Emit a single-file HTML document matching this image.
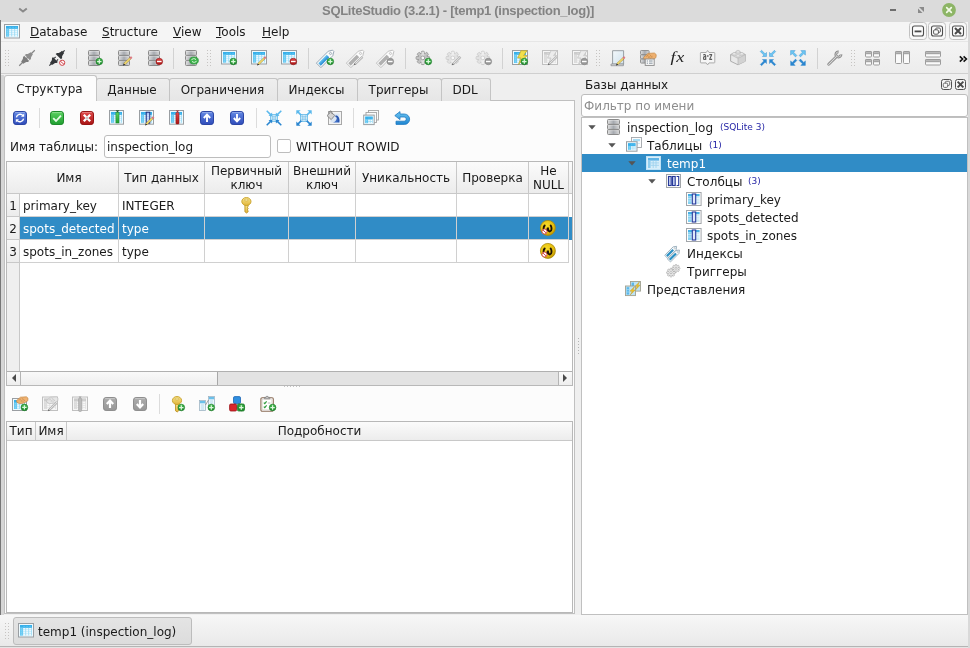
<!DOCTYPE html>
<html><head><meta charset="utf-8">
<style>
*{box-sizing:border-box;margin:0;padding:0}
html,body{width:970px;height:648px;overflow:hidden;background:#efefef}
body{will-change:transform;font-family:"DejaVu Sans","Liberation Sans",sans-serif;font-size:12px;color:#1a1a1a;position:relative}
.a{position:absolute}
.nw{white-space:nowrap}
#title{left:0;top:0;width:970px;height:22px;background:#dbdbdb}
#title .t{position:absolute;left:0;width:916px;top:3px;text-align:center;font-family:"Liberation Sans",sans-serif;font-weight:bold;font-size:13px;letter-spacing:-0.3px;color:#838383;white-space:nowrap}
#menu{left:0;top:22px;width:970px;height:20px;background:#f5f5f5;border-bottom:1px solid #e6e6e6}
#menu span{position:absolute;top:3px;white-space:nowrap}
#tool{left:0;top:42px;width:970px;height:32px;background:linear-gradient(#f4f4f4,#ececec);border-bottom:1px solid #cfcfcf}
svg{position:absolute;overflow:visible}
.tab{position:absolute;top:78px;height:23px;background:linear-gradient(#eeeeee,#e6e6e6);border:1px solid #c4c4c4;border-bottom:none;border-radius:3px 3px 0 0;text-align:center;line-height:23px;white-space:nowrap;padding-right:2px}
.tab.act{top:75px;height:26px;background:#fcfcfc;line-height:27px;z-index:3}
#pane{left:4px;top:100px;width:571px;height:514px;background:#fcfcfc;border:1px solid #c0c0c0}
.sep{position:absolute;width:1px;background:#dcdcdc}
#tbl{left:6px;top:161px;width:567px;height:225px;background:#fff;border:1px solid #b8b8b8}
.hd{position:absolute;background:linear-gradient(#fbfbfb,#ececec);border-right:1px solid #c8c8c8;border-bottom:1px solid #c8c8c8;text-align:center;line-height:14px;white-space:nowrap;display:flex;align-items:center;justify-content:center}
.cell{position:absolute;height:23px;line-height:24px;border-right:1px solid #d0d0d0;border-bottom:1px solid #d0d0d0;padding-left:3px;white-space:nowrap;overflow:hidden}
.sel{background:#308cc6;color:#fff}
.rn{position:absolute;width:13px;height:23px;line-height:24px;text-align:center;background:linear-gradient(#f8f8f8,#ececec);border-right:1px solid #c8c8c8;border-bottom:1px solid #c8c8c8}
</style></head><body>
<div id="title" class="a"><div class="t">SQLiteStudio (3.2.1) - [temp1 (inspection_log)]</div></div>
<div id="menu" class="a">
<span style="left:30px"><u>D</u>atabase</span>
<span style="left:102px"><u>S</u>tructure</span>
<span style="left:173px"><u>V</u>iew</span>
<span style="left:216px"><u>T</u>ools</span>
<span style="left:262px"><u>H</u>elp</span>
</div>
<div id="tool" class="a"></div>
<div class="a" style="left:0;top:20px;width:1px;height:628px;background:#777"></div>
<div class="a" style="left:968px;top:22px;width:2px;height:626px;background:#d9d9d9;z-index:9"></div>
<div class="a" style="left:1px;top:75px;width:3px;height:540px;background:#d6d6d6"></div>

<div id="pane" class="a"></div>
<div class="tab act" style="left:4px;width:93px">Структура</div>
<div class="tab" style="left:96px;width:74px">Данные</div>
<div class="tab" style="left:169px;width:109px">Ограничения</div>
<div class="tab" style="left:277px;width:81px">Индексы</div>
<div class="tab" style="left:357px;width:85px">Триггеры</div>
<div class="tab" style="left:441px;width:50px">DDL</div>
<div class="sep" style="left:39px;top:108px;height:20px"></div>
<div class="sep" style="left:256px;top:108px;height:20px"></div>
<div class="sep" style="left:353px;top:108px;height:20px"></div>
<div class="a nw" style="left:10px;top:140px">Имя таблицы:</div>
<div class="a" style="left:104px;top:135px;width:167px;height:23px;background:#fff;border:1px solid #bdbdbd;border-radius:3px;line-height:23px;padding-left:2px">inspection_log</div>
<div class="a" style="left:277px;top:139px;width:14px;height:14px;background:#fff;border:1px solid #bdbdbd;border-radius:2px"></div>
<div class="a nw" style="left:296px;top:140px">WITHOUT ROWID</div>
<div id="tbl" class="a"></div>

<div class="hd" style="left:7px;top:162px;width:112px;height:32px"><span style="padding-left:13px">Имя</span></div>
<div class="hd" style="left:119px;top:162px;width:86px;height:32px">Тип данных</div>
<div class="hd" style="left:205px;top:162px;width:84px;height:32px">Первичный<br>ключ</div>
<div class="hd" style="left:289px;top:162px;width:67px;height:32px">Внешний<br>ключ</div>
<div class="hd" style="left:356px;top:162px;width:101px;height:32px">Уникальность</div>
<div class="hd" style="left:457px;top:162px;width:72px;height:32px">Проверка</div>
<div class="hd" style="left:529px;top:162px;width:40px;height:32px">Не<br>NULL</div>
<div class="hd" style="left:569px;top:162px;width:3px;height:32px;border-right:none"></div>
<div class="a" style="left:7px;top:194px;width:13px;height:177px;background:#efefef;border-right:1px solid #c8c8c8"></div>
<div class="rn" style="left:7px;top:194px">1</div>
<div class="cell" style="left:20px;top:194px;width:99px">primary_key</div>
<div class="cell" style="left:119px;top:194px;width:86px">INTEGER</div>
<div class="cell" style="left:205px;top:194px;width:84px"></div>
<div class="cell" style="left:289px;top:194px;width:67px"></div>
<div class="cell" style="left:356px;top:194px;width:101px"></div>
<div class="cell" style="left:457px;top:194px;width:72px"></div>
<div class="cell" style="left:529px;top:194px;width:40px"></div>
<div class="rn" style="left:7px;top:217px">2</div>
<div class="cell sel" style="left:20px;top:217px;width:99px">spots_detected</div>
<div class="cell sel" style="left:119px;top:217px;width:86px">type</div>
<div class="cell sel" style="left:205px;top:217px;width:84px"></div>
<div class="cell sel" style="left:289px;top:217px;width:67px"></div>
<div class="cell sel" style="left:356px;top:217px;width:101px"></div>
<div class="cell sel" style="left:457px;top:217px;width:72px"></div>
<div class="cell sel" style="left:529px;top:217px;width:40px"></div>
<div class="cell sel" style="left:569px;top:217px;width:3px;border:none;padding:0"></div>
<div class="rn" style="left:7px;top:240px">3</div>
<div class="cell" style="left:20px;top:240px;width:99px">spots_in_zones</div>
<div class="cell" style="left:119px;top:240px;width:86px">type</div>
<div class="cell" style="left:205px;top:240px;width:84px"></div>
<div class="cell" style="left:289px;top:240px;width:67px"></div>
<div class="cell" style="left:356px;top:240px;width:101px"></div>
<div class="cell" style="left:457px;top:240px;width:72px"></div>
<div class="cell" style="left:529px;top:240px;width:40px"></div>

<div class="a" style="left:7px;top:371px;width:565px;height:14px;background:linear-gradient(#f9f9f9,#eeeeee);border-top:1px solid #b0b0b0"></div>
<div class="a" style="left:20px;top:372px;width:1px;height:13px;background:#b4b4b4"></div>
<div class="a" style="left:558px;top:372px;width:1px;height:13px;background:#b4b4b4"></div>
<div class="a" style="left:217px;top:372px;width:341px;height:13px;background:#e3e3e3;border-left:1px solid #a8a8a8"></div>
<svg style="left:10px;top:373px" width="8" height="10" viewBox="0 0 8 10"><path d="M6 1 L2 5 L6 9Z" fill="#4a4a4a"/></svg>
<svg style="left:561px;top:373px" width="8" height="10" viewBox="0 0 8 10"><path d="M2 1 L6 5 L2 9Z" fill="#4a4a4a"/></svg>
<div class="sep" style="left:159px;top:394px;height:20px"></div>
<div class="a" style="left:6px;top:421px;width:567px;height:192px;background:#fff;border:1px solid #b8b8b8"></div>
<div class="hd" style="left:7px;top:422px;width:29px;height:19px">Тип</div>
<div class="hd" style="left:36px;top:422px;width:31px;height:19px">Имя</div>
<div class="hd" style="left:67px;top:422px;width:505px;height:19px;border-right:none">Подробности</div>
<div class="a" style="left:0;top:615px;width:970px;height:31px;background:linear-gradient(#f7f7f7,#e9e9e9)"></div>
<div class="a" style="left:0;top:646px;width:970px;height:1px;background:#b4b4b4"></div>
<div class="a" style="left:0;top:647px;width:970px;height:1px;background:#e4e4e4"></div>
<div class="a nw" style="left:13px;top:617px;width:179px;height:28px;background:linear-gradient(#e4e4e4,#dcdcdc);border:1px solid #bcbcbc;border-radius:3px;line-height:28px;padding-left:24px">temp1 (inspection_log)</div>
<div class="a nw" style="left:585px;top:78px">Базы данных</div>
<div class="a nw" style="left:581px;top:94px;width:387px;height:23px;background:#fff;border:1px solid #bdbdbd;border-radius:3px;line-height:23px;padding-left:2px;color:#8e8e8e">Фильтр по имени</div>
<div class="a" style="left:581px;top:117px;width:387px;height:498px;background:#fff;border:1px solid #c0c0c0"></div>
<div class="a" style="left:582px;top:154px;width:385px;height:18px;background:#308cc6"></div>

<div class="a nw" style="left:627px;top:119px;line-height:18px">inspection_log</div>
<div class="a nw" style="left:720px;top:120px;line-height:14px;font-size:9px;color:#2626a6">(SQLite 3)</div>
<svg style="left:588px;top:125px" width="8" height="5" viewBox="0 0 8 5"><path d="M0.3 0.2 L7.7 0.2 L4 4.4Z" fill="#555"/></svg>
<div class="a nw" style="left:647px;top:137px;line-height:18px">Таблицы</div>
<div class="a nw" style="left:709px;top:138px;line-height:14px;font-size:9px;color:#2626a6">(1)</div>
<svg style="left:608px;top:143px" width="8" height="5" viewBox="0 0 8 5"><path d="M0.3 0.2 L7.7 0.2 L4 4.4Z" fill="#555"/></svg>
<div class="a nw" style="left:667px;top:155px;line-height:18px;color:#fff">temp1</div>
<svg style="left:628px;top:161px" width="8" height="5" viewBox="0 0 8 5"><path d="M0.3 0.2 L7.7 0.2 L4 4.4Z" fill="#555"/></svg>
<div class="a nw" style="left:687px;top:173px;line-height:18px">Столбцы</div>
<div class="a nw" style="left:748px;top:174px;line-height:14px;font-size:9px;color:#2626a6">(3)</div>
<svg style="left:648px;top:179px" width="8" height="5" viewBox="0 0 8 5"><path d="M0.3 0.2 L7.7 0.2 L4 4.4Z" fill="#555"/></svg>
<div class="a nw" style="left:707px;top:191px;line-height:18px">primary_key</div>
<div class="a nw" style="left:707px;top:209px;line-height:18px">spots_detected</div>
<div class="a nw" style="left:707px;top:227px;line-height:18px">spots_in_zones</div>
<div class="a nw" style="left:687px;top:245px;line-height:18px">Индексы</div>
<div class="a nw" style="left:687px;top:263px;line-height:18px">Триггеры</div>
<div class="a nw" style="left:647px;top:281px;line-height:18px">Представления</div>
<svg width="0" height="0" style="left:0;top:0"><defs>
<linearGradient id="gS" x1="0" y1="0" x2="0" y2="1"><stop offset="0" stop-color="#e6e6e6"/><stop offset="0.5" stop-color="#b4b4b4"/><stop offset="1" stop-color="#8e8e8e"/></linearGradient>
<linearGradient id="gH" x1="0" y1="0" x2="1" y2="0"><stop offset="0" stop-color="#e0e0e0"/><stop offset="0.5" stop-color="#a6aab0"/><stop offset="1" stop-color="#dadada"/></linearGradient>
<linearGradient id="gB" x1="0" y1="0" x2="0" y2="1"><stop offset="0" stop-color="#6288e4"/><stop offset="1" stop-color="#304cba"/></linearGradient>
<linearGradient id="gG" x1="0" y1="0" x2="0" y2="1"><stop offset="0" stop-color="#4cc256"/><stop offset="1" stop-color="#178426"/></linearGradient>
<linearGradient id="gG2" x1="0" y1="0" x2="0" y2="1"><stop offset="0" stop-color="#5cd262"/><stop offset="1" stop-color="#1f9e30"/></linearGradient>
<linearGradient id="gR" x1="0" y1="0" x2="0" y2="1"><stop offset="0" stop-color="#e24a4a"/><stop offset="1" stop-color="#a81414"/></linearGradient>
<linearGradient id="gY" x1="0" y1="0" x2="0" y2="1"><stop offset="0" stop-color="#adadad"/><stop offset="1" stop-color="#979797"/></linearGradient>
<linearGradient id="gK" x1="0" y1="0" x2="0" y2="1"><stop offset="0" stop-color="#f8e68e"/><stop offset="1" stop-color="#e0b43a"/></linearGradient>
<linearGradient id="gP" x1="0" y1="0" x2="1" y2="1"><stop offset="0" stop-color="#f3f8fb"/><stop offset="1" stop-color="#d0e2ee"/></linearGradient>
<linearGradient id="gA" x1="0" y1="0" x2="0" y2="1"><stop offset="0" stop-color="#6cc6f2"/><stop offset="1" stop-color="#1f86d2"/></linearGradient>
<radialGradient id="gN" cx="0.4" cy="0.35" r="0.7"><stop offset="0" stop-color="#f7dc2a"/><stop offset="0.7" stop-color="#e4bb0c"/><stop offset="1" stop-color="#b98f00"/></radialGradient>
</defs></svg>
<svg style="left:18px;top:7px" width="10" height="6" viewBox="0 0 10 6"><path d="M1.2 1.4L5 4.6L8.8 1.4" fill="none" stroke="#898989" stroke-width="1.9" stroke-linejoin="miter"/></svg>
<svg style="left:890px;top:9px" width="6" height="2" viewBox="0 0 6 2"><rect width="6" height="2" fill="#6e6e6e"/></svg>
<svg style="left:918px;top:7px" width="6" height="6" viewBox="0 0 6 6"><path d="M1 0h5v5z" fill="#8a8a8a"/><path d="M0 1.5v4.5h4.5z" fill="#8a8a8a"/></svg>
<svg style="left:942px;top:2.7px" width="14" height="14" viewBox="0 0 14 14"><circle cx="7" cy="7" r="6.9" fill="#8db566"/><path d="M4.7 4.7l4.6 4.6M9.3 4.7l-4.6 4.6" stroke="#f2fbe8" stroke-width="1.7" stroke-linecap="round"/></svg>
<svg style="left:4px;top:24px" width="16" height="15" viewBox="0 0 16 15"><g transform="translate(0 0)"><rect x="0.5" y="0.5" width="15" height="13.5" fill="#eefaff" stroke="#9a9ea2" stroke-width="1"/><rect x="2" y="2" width="12" height="10.5" fill="#9cdcf6"/><rect x="2" y="2" width="12" height="2.7" fill="#38b0ea"/><rect x="2" y="4.7" width="2.8" height="7.8" fill="#5cc6f2"/><rect x="5.20" y="2.9" width="1.97" height="1" fill="#5cc6f2" opacity="0.8"/><rect x="5.20" y="5.20" width="2.07" height="1.3" fill="#ffffff"/><rect x="5.20" y="7.20" width="2.07" height="1.3" fill="#ffffff"/><rect x="5.20" y="9.20" width="2.07" height="1.3" fill="#ffffff"/><rect x="5.20" y="11.20" width="2.07" height="1.3" fill="#ffffff"/><rect x="8.17" y="2.9" width="1.97" height="1" fill="#5cc6f2" opacity="0.8"/><rect x="8.17" y="5.20" width="2.07" height="1.3" fill="#ffffff"/><rect x="8.17" y="7.20" width="2.07" height="1.3" fill="#ffffff"/><rect x="8.17" y="9.20" width="2.07" height="1.3" fill="#ffffff"/><rect x="8.17" y="11.20" width="2.07" height="1.3" fill="#ffffff"/><rect x="11.13" y="2.9" width="1.97" height="1" fill="#5cc6f2" opacity="0.8"/><rect x="11.13" y="5.20" width="2.07" height="1.3" fill="#ffffff"/><rect x="11.13" y="7.20" width="2.07" height="1.3" fill="#ffffff"/><rect x="11.13" y="9.20" width="2.07" height="1.3" fill="#ffffff"/><rect x="11.13" y="11.20" width="2.07" height="1.3" fill="#ffffff"/><rect x="2.7" y="5.20" width="1.3" height="1.3" fill="#9cdcf6" opacity="0.7"/><rect x="2.7" y="7.20" width="1.3" height="1.3" fill="#9cdcf6" opacity="0.7"/><rect x="2.7" y="9.20" width="1.3" height="1.3" fill="#9cdcf6" opacity="0.7"/><rect x="2.7" y="11.20" width="1.3" height="1.3" fill="#9cdcf6" opacity="0.7"/></g></svg>
<svg style="left:909px;top:22px" width="18" height="18" viewBox="0 0 18 18"><rect x="0.5" y="0.5" width="17" height="17" rx="3" fill="#f8f8f8" stroke="#c2c2c2" stroke-width="1"/><rect x="3.5" y="4" width="11" height="10" rx="2" fill="#fbfbfb" stroke="#4e4e4e" stroke-width="1.1"/><path d="M5.6 9.4h6.8" stroke="#4a4a4a" stroke-width="1.8"/></svg>
<svg style="left:928px;top:22px" width="18" height="18" viewBox="0 0 18 18"><rect x="0.5" y="0.5" width="17" height="17" rx="3" fill="#f8f8f8" stroke="#c2c2c2" stroke-width="1"/><rect x="3.5" y="4" width="11" height="10" rx="2" fill="#fbfbfb" stroke="#4e4e4e" stroke-width="1.1"/><rect x="7.6" y="6" width="4.8" height="4.4" rx="1.2" fill="none" stroke="#4a4a4a" stroke-width="0.9"/><rect x="5.6" y="7.8" width="4.8" height="4.4" rx="1.2" fill="#fbfbfb" stroke="#4a4a4a" stroke-width="0.9"/></svg>
<svg style="left:948.5px;top:22px" width="18" height="18" viewBox="0 0 18 18"><rect x="0.5" y="0.5" width="17" height="17" rx="3" fill="#f8f8f8" stroke="#c2c2c2" stroke-width="1"/><rect x="3.5" y="4" width="11" height="10" rx="2" fill="#fbfbfb" stroke="#4e4e4e" stroke-width="1.1"/><path d="M6 6l6 6M12 6l-6 6" stroke="#4a4a4a" stroke-width="2"/></svg>
<svg style="left:941px;top:79px" width="11" height="11" viewBox="0 0 11 11"><rect x="0.5" y="0.5" width="10" height="10" rx="2" fill="#f4f4f4" stroke="#505050" stroke-width="1"/><rect x="4.3" y="2.3" width="4.4" height="4.2" rx="1.2" fill="none" stroke="#505050" stroke-width="0.8"/><rect x="2.3" y="4.2" width="4.4" height="4.2" rx="1.2" fill="#f8f8f8" stroke="#505050" stroke-width="0.8"/></svg>
<svg style="left:955px;top:79px" width="11" height="11" viewBox="0 0 11 11"><rect x="0.5" y="0.5" width="10" height="10" rx="2" fill="#f4f4f4" stroke="#505050" stroke-width="1"/><path d="M2.6 2.6l5.8 5.8M8.4 2.6l-5.8 5.8" stroke="#4a4a4a" stroke-width="1.9"/></svg>
<svg style="left:5px;top:50px" width="4" height="19" viewBox="0 0 4 19"><rect x="0" y="0" width="1" height="1" fill="#c6c4c2"/><rect x="3" y="0" width="1" height="1" fill="#c6c4c2"/><rect x="0" y="3" width="1" height="1" fill="#c6c4c2"/><rect x="3" y="3" width="1" height="1" fill="#c6c4c2"/><rect x="0" y="6" width="1" height="1" fill="#c6c4c2"/><rect x="3" y="6" width="1" height="1" fill="#c6c4c2"/><rect x="0" y="9" width="1" height="1" fill="#c6c4c2"/><rect x="3" y="9" width="1" height="1" fill="#c6c4c2"/><rect x="0" y="12" width="1" height="1" fill="#c6c4c2"/><rect x="3" y="12" width="1" height="1" fill="#c6c4c2"/><rect x="0" y="15" width="1" height="1" fill="#c6c4c2"/><rect x="3" y="15" width="1" height="1" fill="#c6c4c2"/></svg>
<svg style="left:19px;top:50px" width="16" height="16" viewBox="0 0 16 16"><g transform="translate(8 8) rotate(-45)"><path d="M-11 0H11" stroke="#858585" stroke-width="1.2"/><path d="M0.5 -3.6V3.6L2.2 3.4 3.4 2.4 5.4 1.8 6.8 1.5V-1.5L5.4 -1.8 3.4 -2.4 2.2 -3.4z" fill="#8e8e8e"/><path d="M-0.5 -3.6V3.6L-2.2 3.4 -3.4 2.4 -5.4 1.8 -6.8 1.5V-1.5L-5.4 -1.8 -3.4 -2.4 -2.2 -3.4z" fill="#7c7c7c"/></g></svg>
<svg style="left:49px;top:50px" width="16" height="16" viewBox="0 0 16 16"><g transform="translate(8 8) rotate(-45)"><path d="M-10.8 0H-8M8 0H10.8" stroke="#3a3d40" stroke-width="1.3"/><path d="M-2.2 -3.5V3.5L-3.8 3.3 -5 2.2 -7 1.7 -8.6 1.4V-1.4L-7 -1.7 -5 -2.2 -3.8 -3.3z" fill="#34373a"/><path d="M-2.3 -1.7H-0.2M-2.3 1.7H-0.2" stroke="#34373a" stroke-width="1.1"/><path d="M1.9 -3.8V3.8L3.6 3.6 4.8 2.4 6.8 1.8 8.6 1.5V-1.5L6.8 -1.8 4.8 -2.4 3.6 -3.6z" fill="#34373a"/></g><circle cx="13.2" cy="12.8" r="2.6" fill="#fff" stroke="#d0444a" stroke-width="1"/><path d="M11.4 11.2l3.6 3.2" stroke="#d0444a" stroke-width="1"/></svg>
<div class="a" style="left:76px;top:48px;width:1px;height:21px;background:#d2d2d2"></div>
<svg style="left:87px;top:50px" width="16" height="16" viewBox="0 0 16 16"><rect x="1.5" y="0.5" width="11" height="4.8" rx="0.9" fill="url(#gH)" stroke="#8a8a8a" stroke-width="1"/><path d="M2.4 1.5H11.6" stroke="#f6f6f6" stroke-width="0.7" opacity="0.55"/><rect x="1.5" y="5.6" width="11" height="4.8" rx="0.9" fill="url(#gH)" stroke="#8a8a8a" stroke-width="1"/><path d="M2.4 6.6H11.6" stroke="#f6f6f6" stroke-width="0.7" opacity="0.55"/><rect x="1.5" y="10.7" width="11" height="4.8" rx="0.9" fill="url(#gH)" stroke="#8a8a8a" stroke-width="1"/><path d="M2.4 11.7H11.6" stroke="#f6f6f6" stroke-width="0.7" opacity="0.55"/><circle cx="12.3" cy="11.5" r="3.3" fill="url(#gG)" stroke="#1f7f2b" stroke-width="0.7"/><path d="M10.100000000000001 11.5H14.5M12.3 9.3V13.7" stroke="#dcf8dc" stroke-width="1.25"/></svg>
<svg style="left:117px;top:50px" width="16" height="16" viewBox="0 0 16 16"><rect x="1.5" y="0.5" width="11" height="4.8" rx="0.9" fill="url(#gH)" stroke="#8a8a8a" stroke-width="1"/><path d="M2.4 1.5H11.6" stroke="#f6f6f6" stroke-width="0.7" opacity="0.55"/><rect x="1.5" y="5.6" width="11" height="4.8" rx="0.9" fill="url(#gH)" stroke="#8a8a8a" stroke-width="1"/><path d="M2.4 6.6H11.6" stroke="#f6f6f6" stroke-width="0.7" opacity="0.55"/><rect x="1.5" y="10.7" width="11" height="4.8" rx="0.9" fill="url(#gH)" stroke="#8a8a8a" stroke-width="1"/><path d="M2.4 11.7H11.6" stroke="#f6f6f6" stroke-width="0.7" opacity="0.55"/><path d="M7.4 14L13.4 8.2" stroke="#b48a20" stroke-width="2"/><path d="M7.4 14L13.4 8.2" stroke="#f6e67c" stroke-width="1.1"/><path d="M13.1 8.5L14.7 7" stroke="#d2666e" stroke-width="2"/><path d="M13.1 8.5L14.7 7" stroke="#f0a0a4" stroke-width="0.8"/><path d="M6 15.4l0.8-2 1.3 1.3z" fill="#111"/></svg>
<svg style="left:147px;top:50px" width="16" height="16" viewBox="0 0 16 16"><rect x="1.5" y="0.5" width="11" height="4.8" rx="0.9" fill="url(#gH)" stroke="#8a8a8a" stroke-width="1"/><path d="M2.4 1.5H11.6" stroke="#f6f6f6" stroke-width="0.7" opacity="0.55"/><rect x="1.5" y="5.6" width="11" height="4.8" rx="0.9" fill="url(#gH)" stroke="#8a8a8a" stroke-width="1"/><path d="M2.4 6.6H11.6" stroke="#f6f6f6" stroke-width="0.7" opacity="0.55"/><rect x="1.5" y="10.7" width="11" height="4.8" rx="0.9" fill="url(#gH)" stroke="#8a8a8a" stroke-width="1"/><path d="M2.4 11.7H11.6" stroke="#f6f6f6" stroke-width="0.7" opacity="0.55"/><circle cx="12.3" cy="11.5" r="3.3" fill="url(#gR)" stroke="#8e1010" stroke-width="0.6"/><path d="M10.0 11.5H14.600000000000001" stroke="#fff" stroke-width="1.4"/></svg>
<div class="a" style="left:173px;top:48px;width:1px;height:21px;background:#d2d2d2"></div>
<svg style="left:184px;top:50px" width="16" height="16" viewBox="0 0 16 16"><rect x="1.5" y="0.5" width="11" height="4.8" rx="0.9" fill="url(#gH)" stroke="#8a8a8a" stroke-width="1"/><path d="M2.4 1.5H11.6" stroke="#f6f6f6" stroke-width="0.7" opacity="0.55"/><rect x="1.5" y="5.6" width="11" height="4.8" rx="0.9" fill="url(#gH)" stroke="#8a8a8a" stroke-width="1"/><path d="M2.4 6.6H11.6" stroke="#f6f6f6" stroke-width="0.7" opacity="0.55"/><rect x="1.5" y="10.7" width="11" height="4.8" rx="0.9" fill="url(#gH)" stroke="#8a8a8a" stroke-width="1"/><path d="M2.4 11.7H11.6" stroke="#f6f6f6" stroke-width="0.7" opacity="0.55"/><ellipse cx="10" cy="10.5" rx="4.4" ry="3.6" fill="#3bb24a" stroke="#1f8a2e" stroke-width="0.6"/><path d="M7.4 10.2c.6-1.8 3.4-2 4.6-.6M12.6 10.8c-.6 1.8-3.4 2-4.6.6" fill="none" stroke="#dff7e0" stroke-width="1"/></svg>
<svg style="left:207px;top:50px" width="4" height="19" viewBox="0 0 4 19"><rect x="0" y="0" width="1" height="1" fill="#c6c4c2"/><rect x="3" y="0" width="1" height="1" fill="#c6c4c2"/><rect x="0" y="3" width="1" height="1" fill="#c6c4c2"/><rect x="3" y="3" width="1" height="1" fill="#c6c4c2"/><rect x="0" y="6" width="1" height="1" fill="#c6c4c2"/><rect x="3" y="6" width="1" height="1" fill="#c6c4c2"/><rect x="0" y="9" width="1" height="1" fill="#c6c4c2"/><rect x="3" y="9" width="1" height="1" fill="#c6c4c2"/><rect x="0" y="12" width="1" height="1" fill="#c6c4c2"/><rect x="3" y="12" width="1" height="1" fill="#c6c4c2"/><rect x="0" y="15" width="1" height="1" fill="#c6c4c2"/><rect x="3" y="15" width="1" height="1" fill="#c6c4c2"/></svg>
<svg style="left:221px;top:50px" width="16" height="16" viewBox="0 0 16 16"><g transform="translate(0 0)"><rect x="0.5" y="0.5" width="15" height="13.5" fill="#eefaff" stroke="#9a9ea2" stroke-width="1"/><rect x="2" y="2" width="12" height="10.5" fill="#9cdcf6"/><rect x="2" y="2" width="12" height="2.7" fill="#38b0ea"/><rect x="2" y="4.7" width="2.8" height="7.8" fill="#5cc6f2"/><rect x="5.20" y="2.9" width="1.97" height="1" fill="#5cc6f2" opacity="0.8"/><rect x="5.20" y="5.20" width="2.07" height="1.3" fill="#ffffff"/><rect x="5.20" y="7.20" width="2.07" height="1.3" fill="#ffffff"/><rect x="5.20" y="9.20" width="2.07" height="1.3" fill="#ffffff"/><rect x="5.20" y="11.20" width="2.07" height="1.3" fill="#ffffff"/><rect x="8.17" y="2.9" width="1.97" height="1" fill="#5cc6f2" opacity="0.8"/><rect x="8.17" y="5.20" width="2.07" height="1.3" fill="#ffffff"/><rect x="8.17" y="7.20" width="2.07" height="1.3" fill="#ffffff"/><rect x="8.17" y="9.20" width="2.07" height="1.3" fill="#ffffff"/><rect x="8.17" y="11.20" width="2.07" height="1.3" fill="#ffffff"/><rect x="11.13" y="2.9" width="1.97" height="1" fill="#5cc6f2" opacity="0.8"/><rect x="11.13" y="5.20" width="2.07" height="1.3" fill="#ffffff"/><rect x="11.13" y="7.20" width="2.07" height="1.3" fill="#ffffff"/><rect x="11.13" y="9.20" width="2.07" height="1.3" fill="#ffffff"/><rect x="11.13" y="11.20" width="2.07" height="1.3" fill="#ffffff"/><rect x="2.7" y="5.20" width="1.3" height="1.3" fill="#9cdcf6" opacity="0.7"/><rect x="2.7" y="7.20" width="1.3" height="1.3" fill="#9cdcf6" opacity="0.7"/><rect x="2.7" y="9.20" width="1.3" height="1.3" fill="#9cdcf6" opacity="0.7"/><rect x="2.7" y="11.20" width="1.3" height="1.3" fill="#9cdcf6" opacity="0.7"/></g><circle cx="12.3" cy="11.5" r="3.3" fill="url(#gG)" stroke="#1f7f2b" stroke-width="0.7"/><path d="M10.100000000000001 11.5H14.5M12.3 9.3V13.7" stroke="#dcf8dc" stroke-width="1.25"/></svg>
<svg style="left:251px;top:50px" width="16" height="16" viewBox="0 0 16 16"><g transform="translate(0 0)"><rect x="0.5" y="0.5" width="15" height="13.5" fill="#eefaff" stroke="#9a9ea2" stroke-width="1"/><rect x="2" y="2" width="12" height="10.5" fill="#9cdcf6"/><rect x="2" y="2" width="12" height="2.7" fill="#38b0ea"/><rect x="2" y="4.7" width="2.8" height="7.8" fill="#5cc6f2"/><rect x="5.20" y="2.9" width="1.97" height="1" fill="#5cc6f2" opacity="0.8"/><rect x="5.20" y="5.20" width="2.07" height="1.3" fill="#ffffff"/><rect x="5.20" y="7.20" width="2.07" height="1.3" fill="#ffffff"/><rect x="5.20" y="9.20" width="2.07" height="1.3" fill="#ffffff"/><rect x="5.20" y="11.20" width="2.07" height="1.3" fill="#ffffff"/><rect x="8.17" y="2.9" width="1.97" height="1" fill="#5cc6f2" opacity="0.8"/><rect x="8.17" y="5.20" width="2.07" height="1.3" fill="#ffffff"/><rect x="8.17" y="7.20" width="2.07" height="1.3" fill="#ffffff"/><rect x="8.17" y="9.20" width="2.07" height="1.3" fill="#ffffff"/><rect x="8.17" y="11.20" width="2.07" height="1.3" fill="#ffffff"/><rect x="11.13" y="2.9" width="1.97" height="1" fill="#5cc6f2" opacity="0.8"/><rect x="11.13" y="5.20" width="2.07" height="1.3" fill="#ffffff"/><rect x="11.13" y="7.20" width="2.07" height="1.3" fill="#ffffff"/><rect x="11.13" y="9.20" width="2.07" height="1.3" fill="#ffffff"/><rect x="11.13" y="11.20" width="2.07" height="1.3" fill="#ffffff"/><rect x="2.7" y="5.20" width="1.3" height="1.3" fill="#9cdcf6" opacity="0.7"/><rect x="2.7" y="7.20" width="1.3" height="1.3" fill="#9cdcf6" opacity="0.7"/><rect x="2.7" y="9.20" width="1.3" height="1.3" fill="#9cdcf6" opacity="0.7"/><rect x="2.7" y="11.20" width="1.3" height="1.3" fill="#9cdcf6" opacity="0.7"/></g><path d="M7.4 14L13.4 8.2" stroke="#b48a20" stroke-width="2"/><path d="M7.4 14L13.4 8.2" stroke="#f6e67c" stroke-width="1.1"/><path d="M13.1 8.5L14.7 7" stroke="#d2666e" stroke-width="2"/><path d="M13.1 8.5L14.7 7" stroke="#f0a0a4" stroke-width="0.8"/><path d="M6 15.4l0.8-2 1.3 1.3z" fill="#111"/></svg>
<svg style="left:281px;top:50px" width="16" height="16" viewBox="0 0 16 16"><g transform="translate(0 0)"><rect x="0.5" y="0.5" width="15" height="13.5" fill="#eefaff" stroke="#9a9ea2" stroke-width="1"/><rect x="2" y="2" width="12" height="10.5" fill="#9cdcf6"/><rect x="2" y="2" width="12" height="2.7" fill="#38b0ea"/><rect x="2" y="4.7" width="2.8" height="7.8" fill="#5cc6f2"/><rect x="5.20" y="2.9" width="1.97" height="1" fill="#5cc6f2" opacity="0.8"/><rect x="5.20" y="5.20" width="2.07" height="1.3" fill="#ffffff"/><rect x="5.20" y="7.20" width="2.07" height="1.3" fill="#ffffff"/><rect x="5.20" y="9.20" width="2.07" height="1.3" fill="#ffffff"/><rect x="5.20" y="11.20" width="2.07" height="1.3" fill="#ffffff"/><rect x="8.17" y="2.9" width="1.97" height="1" fill="#5cc6f2" opacity="0.8"/><rect x="8.17" y="5.20" width="2.07" height="1.3" fill="#ffffff"/><rect x="8.17" y="7.20" width="2.07" height="1.3" fill="#ffffff"/><rect x="8.17" y="9.20" width="2.07" height="1.3" fill="#ffffff"/><rect x="8.17" y="11.20" width="2.07" height="1.3" fill="#ffffff"/><rect x="11.13" y="2.9" width="1.97" height="1" fill="#5cc6f2" opacity="0.8"/><rect x="11.13" y="5.20" width="2.07" height="1.3" fill="#ffffff"/><rect x="11.13" y="7.20" width="2.07" height="1.3" fill="#ffffff"/><rect x="11.13" y="9.20" width="2.07" height="1.3" fill="#ffffff"/><rect x="11.13" y="11.20" width="2.07" height="1.3" fill="#ffffff"/><rect x="2.7" y="5.20" width="1.3" height="1.3" fill="#9cdcf6" opacity="0.7"/><rect x="2.7" y="7.20" width="1.3" height="1.3" fill="#9cdcf6" opacity="0.7"/><rect x="2.7" y="9.20" width="1.3" height="1.3" fill="#9cdcf6" opacity="0.7"/><rect x="2.7" y="11.20" width="1.3" height="1.3" fill="#9cdcf6" opacity="0.7"/></g><circle cx="12.3" cy="11.5" r="3.3" fill="url(#gR)" stroke="#8e1010" stroke-width="0.6"/><path d="M10.0 11.5H14.600000000000001" stroke="#fff" stroke-width="1.4"/></svg>
<div class="a" style="left:308px;top:48px;width:1px;height:21px;background:#d2d2d2"></div>
<svg style="left:318px;top:50px" width="16" height="16" viewBox="0 0 16 16"><g transform="translate(8 8) rotate(-45)"><path d="M-10.4 -3.2H6.4L10.2 -0.9V0.9L6.4 3.2H-10.4z" fill="#fcfcfc" stroke="#93a4b2" stroke-width="0.9" stroke-linejoin="round"/><rect x="-9.2" y="-1.8" width="12" height="3.6" fill="url(#gA)"/><circle cx="6.4" cy="0" r="1.1" fill="#f4f4f4" stroke="#93a4b2" stroke-width="0.8"/></g><circle cx="12.3" cy="11.5" r="3.3" fill="url(#gG)" stroke="#1f7f2b" stroke-width="0.7"/><path d="M10.100000000000001 11.5H14.5M12.3 9.3V13.7" stroke="#dcf8dc" stroke-width="1.25"/></svg>
<svg style="left:348px;top:50px" width="16" height="16" viewBox="0 0 16 16"><g transform="translate(8 8) rotate(-45)"><path d="M-10.4 -3.2H6.4L10.2 -0.9V0.9L6.4 3.2H-10.4z" fill="#fcfcfc" stroke="#bcbcbc" stroke-width="0.9" stroke-linejoin="round"/><rect x="-9.2" y="-1.8" width="12" height="3.6" fill="#b0b0b0"/><circle cx="6.4" cy="0" r="1.1" fill="#f4f4f4" stroke="#bcbcbc" stroke-width="0.8"/></g><path d="M7.2 13.8L14.5 6.8" stroke="#b4b4b4" stroke-width="2.3"/><path d="M7.2 13.8L14.5 6.8" stroke="#e6e6e6" stroke-width="1"/><path d="M5.8 15.2l0.8-2.1 1.4 1.4z" fill="#666"/></svg>
<svg style="left:378px;top:50px" width="16" height="16" viewBox="0 0 16 16"><g transform="translate(8 8) rotate(-45)"><path d="M-10.4 -3.2H6.4L10.2 -0.9V0.9L6.4 3.2H-10.4z" fill="#fcfcfc" stroke="#bcbcbc" stroke-width="0.9" stroke-linejoin="round"/><rect x="-9.2" y="-1.8" width="12" height="3.6" fill="#b0b0b0"/><circle cx="6.4" cy="0" r="1.1" fill="#f4f4f4" stroke="#bcbcbc" stroke-width="0.8"/></g><circle cx="12.3" cy="11.5" r="3.3" fill="#9a9a9a" stroke="#808080" stroke-width="0.6"/><path d="M10.0 11.5H14.600000000000001" stroke="#fff" stroke-width="1.4"/></svg>
<div class="a" style="left:405px;top:48px;width:1px;height:21px;background:#d2d2d2"></div>
<svg style="left:416px;top:50px" width="16" height="16" viewBox="0 0 16 16"><g><rect x="5.30" y="1.23" width="3.01" height="3.76" rx="0.8" fill="#c2c2c2" stroke="#8c8c8c" stroke-width="0.8" transform="rotate(0 6.8 7.9)"/><rect x="5.30" y="1.23" width="3.01" height="3.76" rx="0.8" fill="#c2c2c2" stroke="#8c8c8c" stroke-width="0.8" transform="rotate(45 6.8 7.9)"/><rect x="5.30" y="1.23" width="3.01" height="3.76" rx="0.8" fill="#c2c2c2" stroke="#8c8c8c" stroke-width="0.8" transform="rotate(90 6.8 7.9)"/><rect x="5.30" y="1.23" width="3.01" height="3.76" rx="0.8" fill="#c2c2c2" stroke="#8c8c8c" stroke-width="0.8" transform="rotate(135 6.8 7.9)"/><rect x="5.30" y="1.23" width="3.01" height="3.76" rx="0.8" fill="#c2c2c2" stroke="#8c8c8c" stroke-width="0.8" transform="rotate(180 6.8 7.9)"/><rect x="5.30" y="1.23" width="3.01" height="3.76" rx="0.8" fill="#c2c2c2" stroke="#8c8c8c" stroke-width="0.8" transform="rotate(225 6.8 7.9)"/><rect x="5.30" y="1.23" width="3.01" height="3.76" rx="0.8" fill="#c2c2c2" stroke="#8c8c8c" stroke-width="0.8" transform="rotate(270 6.8 7.9)"/><rect x="5.30" y="1.23" width="3.01" height="3.76" rx="0.8" fill="#c2c2c2" stroke="#8c8c8c" stroke-width="0.8" transform="rotate(315 6.8 7.9)"/><circle cx="6.8" cy="7.9" r="4.7" fill="#c2c2c2" stroke="#8c8c8c" stroke-width="0.8"/><rect x="5.67" y="1.79" width="2.26" height="2.82" fill="#c2c2c2" transform="rotate(0 6.8 7.9)"/><rect x="5.67" y="1.79" width="2.26" height="2.82" fill="#c2c2c2" transform="rotate(45 6.8 7.9)"/><rect x="5.67" y="1.79" width="2.26" height="2.82" fill="#c2c2c2" transform="rotate(90 6.8 7.9)"/><rect x="5.67" y="1.79" width="2.26" height="2.82" fill="#c2c2c2" transform="rotate(135 6.8 7.9)"/><rect x="5.67" y="1.79" width="2.26" height="2.82" fill="#c2c2c2" transform="rotate(180 6.8 7.9)"/><rect x="5.67" y="1.79" width="2.26" height="2.82" fill="#c2c2c2" transform="rotate(225 6.8 7.9)"/><rect x="5.67" y="1.79" width="2.26" height="2.82" fill="#c2c2c2" transform="rotate(270 6.8 7.9)"/><rect x="5.67" y="1.79" width="2.26" height="2.82" fill="#c2c2c2" transform="rotate(315 6.8 7.9)"/><rect x="5.39" y="1.79" width="2.82" height="12.22" fill="#fff" opacity="0.45"/><circle cx="6.8" cy="7.9" r="1.88" fill="#f8f8f8" stroke="#8c8c8c" stroke-width="0.8"/></g><circle cx="12.3" cy="11.5" r="3.3" fill="url(#gG)" stroke="#1f7f2b" stroke-width="0.7"/><path d="M10.100000000000001 11.5H14.5M12.3 9.3V13.7" stroke="#dcf8dc" stroke-width="1.25"/></svg>
<svg style="left:446px;top:50px" width="16" height="16" viewBox="0 0 16 16"><g><rect x="5.30" y="1.23" width="3.01" height="3.76" rx="0.8" fill="#e2e2e2" stroke="#c6c6c6" stroke-width="0.8" transform="rotate(0 6.8 7.9)"/><rect x="5.30" y="1.23" width="3.01" height="3.76" rx="0.8" fill="#e2e2e2" stroke="#c6c6c6" stroke-width="0.8" transform="rotate(45 6.8 7.9)"/><rect x="5.30" y="1.23" width="3.01" height="3.76" rx="0.8" fill="#e2e2e2" stroke="#c6c6c6" stroke-width="0.8" transform="rotate(90 6.8 7.9)"/><rect x="5.30" y="1.23" width="3.01" height="3.76" rx="0.8" fill="#e2e2e2" stroke="#c6c6c6" stroke-width="0.8" transform="rotate(135 6.8 7.9)"/><rect x="5.30" y="1.23" width="3.01" height="3.76" rx="0.8" fill="#e2e2e2" stroke="#c6c6c6" stroke-width="0.8" transform="rotate(180 6.8 7.9)"/><rect x="5.30" y="1.23" width="3.01" height="3.76" rx="0.8" fill="#e2e2e2" stroke="#c6c6c6" stroke-width="0.8" transform="rotate(225 6.8 7.9)"/><rect x="5.30" y="1.23" width="3.01" height="3.76" rx="0.8" fill="#e2e2e2" stroke="#c6c6c6" stroke-width="0.8" transform="rotate(270 6.8 7.9)"/><rect x="5.30" y="1.23" width="3.01" height="3.76" rx="0.8" fill="#e2e2e2" stroke="#c6c6c6" stroke-width="0.8" transform="rotate(315 6.8 7.9)"/><circle cx="6.8" cy="7.9" r="4.7" fill="#e2e2e2" stroke="#c6c6c6" stroke-width="0.8"/><rect x="5.67" y="1.79" width="2.26" height="2.82" fill="#e2e2e2" transform="rotate(0 6.8 7.9)"/><rect x="5.67" y="1.79" width="2.26" height="2.82" fill="#e2e2e2" transform="rotate(45 6.8 7.9)"/><rect x="5.67" y="1.79" width="2.26" height="2.82" fill="#e2e2e2" transform="rotate(90 6.8 7.9)"/><rect x="5.67" y="1.79" width="2.26" height="2.82" fill="#e2e2e2" transform="rotate(135 6.8 7.9)"/><rect x="5.67" y="1.79" width="2.26" height="2.82" fill="#e2e2e2" transform="rotate(180 6.8 7.9)"/><rect x="5.67" y="1.79" width="2.26" height="2.82" fill="#e2e2e2" transform="rotate(225 6.8 7.9)"/><rect x="5.67" y="1.79" width="2.26" height="2.82" fill="#e2e2e2" transform="rotate(270 6.8 7.9)"/><rect x="5.67" y="1.79" width="2.26" height="2.82" fill="#e2e2e2" transform="rotate(315 6.8 7.9)"/><rect x="5.39" y="1.79" width="2.82" height="12.22" fill="#fff" opacity="0.45"/><circle cx="6.8" cy="7.9" r="1.88" fill="#f8f8f8" stroke="#c6c6c6" stroke-width="0.8"/></g><path d="M7.2 13.8L14.5 6.8" stroke="#b4b4b4" stroke-width="2.3"/><path d="M7.2 13.8L14.5 6.8" stroke="#e6e6e6" stroke-width="1"/><path d="M5.8 15.2l0.8-2.1 1.4 1.4z" fill="#666"/></svg>
<svg style="left:476px;top:50px" width="16" height="16" viewBox="0 0 16 16"><g><rect x="5.30" y="1.23" width="3.01" height="3.76" rx="0.8" fill="#e2e2e2" stroke="#c6c6c6" stroke-width="0.8" transform="rotate(0 6.8 7.9)"/><rect x="5.30" y="1.23" width="3.01" height="3.76" rx="0.8" fill="#e2e2e2" stroke="#c6c6c6" stroke-width="0.8" transform="rotate(45 6.8 7.9)"/><rect x="5.30" y="1.23" width="3.01" height="3.76" rx="0.8" fill="#e2e2e2" stroke="#c6c6c6" stroke-width="0.8" transform="rotate(90 6.8 7.9)"/><rect x="5.30" y="1.23" width="3.01" height="3.76" rx="0.8" fill="#e2e2e2" stroke="#c6c6c6" stroke-width="0.8" transform="rotate(135 6.8 7.9)"/><rect x="5.30" y="1.23" width="3.01" height="3.76" rx="0.8" fill="#e2e2e2" stroke="#c6c6c6" stroke-width="0.8" transform="rotate(180 6.8 7.9)"/><rect x="5.30" y="1.23" width="3.01" height="3.76" rx="0.8" fill="#e2e2e2" stroke="#c6c6c6" stroke-width="0.8" transform="rotate(225 6.8 7.9)"/><rect x="5.30" y="1.23" width="3.01" height="3.76" rx="0.8" fill="#e2e2e2" stroke="#c6c6c6" stroke-width="0.8" transform="rotate(270 6.8 7.9)"/><rect x="5.30" y="1.23" width="3.01" height="3.76" rx="0.8" fill="#e2e2e2" stroke="#c6c6c6" stroke-width="0.8" transform="rotate(315 6.8 7.9)"/><circle cx="6.8" cy="7.9" r="4.7" fill="#e2e2e2" stroke="#c6c6c6" stroke-width="0.8"/><rect x="5.67" y="1.79" width="2.26" height="2.82" fill="#e2e2e2" transform="rotate(0 6.8 7.9)"/><rect x="5.67" y="1.79" width="2.26" height="2.82" fill="#e2e2e2" transform="rotate(45 6.8 7.9)"/><rect x="5.67" y="1.79" width="2.26" height="2.82" fill="#e2e2e2" transform="rotate(90 6.8 7.9)"/><rect x="5.67" y="1.79" width="2.26" height="2.82" fill="#e2e2e2" transform="rotate(135 6.8 7.9)"/><rect x="5.67" y="1.79" width="2.26" height="2.82" fill="#e2e2e2" transform="rotate(180 6.8 7.9)"/><rect x="5.67" y="1.79" width="2.26" height="2.82" fill="#e2e2e2" transform="rotate(225 6.8 7.9)"/><rect x="5.67" y="1.79" width="2.26" height="2.82" fill="#e2e2e2" transform="rotate(270 6.8 7.9)"/><rect x="5.67" y="1.79" width="2.26" height="2.82" fill="#e2e2e2" transform="rotate(315 6.8 7.9)"/><rect x="5.39" y="1.79" width="2.82" height="12.22" fill="#fff" opacity="0.45"/><circle cx="6.8" cy="7.9" r="1.88" fill="#f8f8f8" stroke="#c6c6c6" stroke-width="0.8"/></g><circle cx="12.3" cy="11.5" r="3.3" fill="#9a9a9a" stroke="#808080" stroke-width="0.6"/><path d="M10.0 11.5H14.600000000000001" stroke="#fff" stroke-width="1.4"/></svg>
<div class="a" style="left:502px;top:48px;width:1px;height:21px;background:#d2d2d2"></div>
<svg style="left:512px;top:50px" width="16" height="16" viewBox="0 0 16 16"><g transform="translate(0 0)"><rect x="0.5" y="0.5" width="15" height="14" fill="#eefaff" stroke="#9a9ea2" stroke-width="1"/><rect x="2" y="2" width="12" height="11" fill="#9cdcf6"/><rect x="2" y="2" width="12" height="2.7" fill="#38b0ea"/><rect x="2" y="4.7" width="2.8" height="8.3" fill="#5cc6f2"/><rect x="5.20" y="2.9" width="1.97" height="1" fill="#5cc6f2" opacity="0.8"/><rect x="5.20" y="5.20" width="2.07" height="1.3" fill="#ffffff"/><rect x="5.20" y="7.20" width="2.07" height="1.3" fill="#ffffff"/><rect x="5.20" y="9.20" width="2.07" height="1.3" fill="#ffffff"/><rect x="5.20" y="11.20" width="2.07" height="1.3" fill="#ffffff"/><rect x="8.17" y="2.9" width="1.97" height="1" fill="#5cc6f2" opacity="0.8"/><rect x="8.17" y="5.20" width="2.07" height="1.3" fill="#ffffff"/><rect x="8.17" y="7.20" width="2.07" height="1.3" fill="#ffffff"/><rect x="8.17" y="9.20" width="2.07" height="1.3" fill="#ffffff"/><rect x="8.17" y="11.20" width="2.07" height="1.3" fill="#ffffff"/><rect x="11.13" y="2.9" width="1.97" height="1" fill="#5cc6f2" opacity="0.8"/><rect x="11.13" y="5.20" width="2.07" height="1.3" fill="#ffffff"/><rect x="11.13" y="7.20" width="2.07" height="1.3" fill="#ffffff"/><rect x="11.13" y="9.20" width="2.07" height="1.3" fill="#ffffff"/><rect x="11.13" y="11.20" width="2.07" height="1.3" fill="#ffffff"/><rect x="2.7" y="5.20" width="1.3" height="1.3" fill="#9cdcf6" opacity="0.7"/><rect x="2.7" y="7.20" width="1.3" height="1.3" fill="#9cdcf6" opacity="0.7"/><rect x="2.7" y="9.20" width="1.3" height="1.3" fill="#9cdcf6" opacity="0.7"/><rect x="2.7" y="11.20" width="1.3" height="1.3" fill="#9cdcf6" opacity="0.7"/></g><path d="M15 0.7H9L5.6 8h3.4L6.4 14.6 15.2 5.6h-3.6z" fill="#f2e04a" stroke="#b9a02a" stroke-width="0.7" stroke-linejoin="round"/><circle cx="12.3" cy="11.5" r="3.3" fill="url(#gG)" stroke="#1f7f2b" stroke-width="0.7"/><path d="M10.100000000000001 11.5H14.5M12.3 9.3V13.7" stroke="#dcf8dc" stroke-width="1.25"/></svg>
<svg style="left:542px;top:50px" width="16" height="16" viewBox="0 0 16 16"><g transform="translate(0 0)"><rect x="0.5" y="0.5" width="15" height="14" fill="#f6f6f6" stroke="#c0c0c0" stroke-width="1"/><rect x="2" y="2" width="12" height="11" fill="#e2e2e2"/><rect x="2" y="2" width="12" height="2.7" fill="#cccccc"/><rect x="2" y="4.7" width="2.8" height="8.3" fill="#dadada"/><rect x="5.20" y="2.9" width="1.97" height="1" fill="#dadada" opacity="0.8"/><rect x="5.20" y="5.20" width="2.07" height="1.3" fill="#f8f8f8"/><rect x="5.20" y="7.20" width="2.07" height="1.3" fill="#f8f8f8"/><rect x="5.20" y="9.20" width="2.07" height="1.3" fill="#f8f8f8"/><rect x="5.20" y="11.20" width="2.07" height="1.3" fill="#f8f8f8"/><rect x="8.17" y="2.9" width="1.97" height="1" fill="#dadada" opacity="0.8"/><rect x="8.17" y="5.20" width="2.07" height="1.3" fill="#f8f8f8"/><rect x="8.17" y="7.20" width="2.07" height="1.3" fill="#f8f8f8"/><rect x="8.17" y="9.20" width="2.07" height="1.3" fill="#f8f8f8"/><rect x="8.17" y="11.20" width="2.07" height="1.3" fill="#f8f8f8"/><rect x="11.13" y="2.9" width="1.97" height="1" fill="#dadada" opacity="0.8"/><rect x="11.13" y="5.20" width="2.07" height="1.3" fill="#f8f8f8"/><rect x="11.13" y="7.20" width="2.07" height="1.3" fill="#f8f8f8"/><rect x="11.13" y="9.20" width="2.07" height="1.3" fill="#f8f8f8"/><rect x="11.13" y="11.20" width="2.07" height="1.3" fill="#f8f8f8"/><rect x="2.7" y="5.20" width="1.3" height="1.3" fill="#e2e2e2" opacity="0.7"/><rect x="2.7" y="7.20" width="1.3" height="1.3" fill="#e2e2e2" opacity="0.7"/><rect x="2.7" y="9.20" width="1.3" height="1.3" fill="#e2e2e2" opacity="0.7"/><rect x="2.7" y="11.20" width="1.3" height="1.3" fill="#e2e2e2" opacity="0.7"/></g><path d="M15 0.7H9L5.6 8h3.4L6.4 14.6 15.2 5.6h-3.6z" fill="#ececec" stroke="#c0c0c0" stroke-width="0.7" stroke-linejoin="round"/><path d="M7.2 13.8L14.5 6.8" stroke="#b4b4b4" stroke-width="2.3"/><path d="M7.2 13.8L14.5 6.8" stroke="#e6e6e6" stroke-width="1"/><path d="M5.8 15.2l0.8-2.1 1.4 1.4z" fill="#666"/></svg>
<svg style="left:572px;top:50px" width="16" height="16" viewBox="0 0 16 16"><g transform="translate(0 0)"><rect x="0.5" y="0.5" width="15" height="14" fill="#f6f6f6" stroke="#c0c0c0" stroke-width="1"/><rect x="2" y="2" width="12" height="11" fill="#e2e2e2"/><rect x="2" y="2" width="12" height="2.7" fill="#cccccc"/><rect x="2" y="4.7" width="2.8" height="8.3" fill="#dadada"/><rect x="5.20" y="2.9" width="1.97" height="1" fill="#dadada" opacity="0.8"/><rect x="5.20" y="5.20" width="2.07" height="1.3" fill="#f8f8f8"/><rect x="5.20" y="7.20" width="2.07" height="1.3" fill="#f8f8f8"/><rect x="5.20" y="9.20" width="2.07" height="1.3" fill="#f8f8f8"/><rect x="5.20" y="11.20" width="2.07" height="1.3" fill="#f8f8f8"/><rect x="8.17" y="2.9" width="1.97" height="1" fill="#dadada" opacity="0.8"/><rect x="8.17" y="5.20" width="2.07" height="1.3" fill="#f8f8f8"/><rect x="8.17" y="7.20" width="2.07" height="1.3" fill="#f8f8f8"/><rect x="8.17" y="9.20" width="2.07" height="1.3" fill="#f8f8f8"/><rect x="8.17" y="11.20" width="2.07" height="1.3" fill="#f8f8f8"/><rect x="11.13" y="2.9" width="1.97" height="1" fill="#dadada" opacity="0.8"/><rect x="11.13" y="5.20" width="2.07" height="1.3" fill="#f8f8f8"/><rect x="11.13" y="7.20" width="2.07" height="1.3" fill="#f8f8f8"/><rect x="11.13" y="9.20" width="2.07" height="1.3" fill="#f8f8f8"/><rect x="11.13" y="11.20" width="2.07" height="1.3" fill="#f8f8f8"/><rect x="2.7" y="5.20" width="1.3" height="1.3" fill="#e2e2e2" opacity="0.7"/><rect x="2.7" y="7.20" width="1.3" height="1.3" fill="#e2e2e2" opacity="0.7"/><rect x="2.7" y="9.20" width="1.3" height="1.3" fill="#e2e2e2" opacity="0.7"/><rect x="2.7" y="11.20" width="1.3" height="1.3" fill="#e2e2e2" opacity="0.7"/></g><path d="M15 0.7H9L5.6 8h3.4L6.4 14.6 15.2 5.6h-3.6z" fill="#ececec" stroke="#c0c0c0" stroke-width="0.7" stroke-linejoin="round"/><circle cx="12.3" cy="11.5" r="3.3" fill="#9a9a9a" stroke="#808080" stroke-width="0.6"/><path d="M10.0 11.5H14.600000000000001" stroke="#fff" stroke-width="1.4"/></svg>
<svg style="left:596px;top:50px" width="4" height="19" viewBox="0 0 4 19"><rect x="0" y="0" width="1" height="1" fill="#c6c4c2"/><rect x="3" y="0" width="1" height="1" fill="#c6c4c2"/><rect x="0" y="3" width="1" height="1" fill="#c6c4c2"/><rect x="3" y="3" width="1" height="1" fill="#c6c4c2"/><rect x="0" y="6" width="1" height="1" fill="#c6c4c2"/><rect x="3" y="6" width="1" height="1" fill="#c6c4c2"/><rect x="0" y="9" width="1" height="1" fill="#c6c4c2"/><rect x="3" y="9" width="1" height="1" fill="#c6c4c2"/><rect x="0" y="12" width="1" height="1" fill="#c6c4c2"/><rect x="3" y="12" width="1" height="1" fill="#c6c4c2"/><rect x="0" y="15" width="1" height="1" fill="#c6c4c2"/><rect x="3" y="15" width="1" height="1" fill="#c6c4c2"/></svg>
<svg style="left:610px;top:50px" width="16" height="16" viewBox="0 0 16 16"><path d="M2.6 0.7h11v13.4h-11z" fill="url(#gP)" stroke="#8e969c" stroke-width="0.9"/><path d="M1 14.1h12.4v1.6H1z" fill="#f8f8f8" stroke="#84888c" stroke-width="0.8"/><path d="M7.4 14L13.4 8.2" stroke="#b48a20" stroke-width="2"/><path d="M7.4 14L13.4 8.2" stroke="#f6e67c" stroke-width="1.1"/><path d="M13.1 8.5L14.7 7" stroke="#d2666e" stroke-width="2"/><path d="M13.1 8.5L14.7 7" stroke="#f0a0a4" stroke-width="0.8"/><path d="M6 15.4l0.8-2 1.3 1.3z" fill="#111"/></svg>
<svg style="left:640px;top:50px" width="16" height="16" viewBox="0 0 16 16"><rect x="0.5" y="0.5" width="8.6" height="4" rx="0.8" fill="url(#gH)" stroke="#8a8a8a" stroke-width="0.9"/><rect x="0.5" y="4.8" width="8.6" height="4" rx="0.8" fill="url(#gH)" stroke="#8a8a8a" stroke-width="0.9"/><rect x="0.5" y="9.1" width="8.6" height="4" rx="0.8" fill="url(#gH)" stroke="#8a8a8a" stroke-width="0.9"/><path d="M3.6 7.4L8 3.4l6.4-.4 1.8 1.6-.2 3-3.4 2.2-3 .6-2.6.2-2.6-1.4z" fill="#eeb070" stroke="#c48a48" stroke-width="0.7" stroke-linejoin="round"/><path d="M6 7l3-2.6M8 8l3-2.6M10 8.6l2.6-2.4M7 5l3 3.4M9.4 4.2l3 3.2" stroke="#c08440" stroke-width="0.5"/><rect x="5.2" y="9" width="9" height="6.4" fill="#f6f6f6" stroke="#8a8a8a" stroke-width="0.9"/><path d="M6.8 11h1.2M9 11h3.6M6.8 13.2h1.2M9 13.2h3.6" stroke="#7a8a96" stroke-width="0.9"/></svg>
<svg style="left:669px;top:47px" width="18" height="22" viewBox="0 0 18 22"><text transform="translate(1.6 15.2) scale(1.25 1)" font-family="Liberation Serif,DejaVu Serif,serif" font-style="italic" font-size="14.5" letter-spacing="0.4" fill="#222">fx</text></svg>
<svg style="left:700px;top:50px" width="16" height="15" viewBox="0 0 16 15"><path d="M1 2.5h5.2l1.4-2 1.4 2h5.2a.6.6 0 0 1 .6.6v9.2a.6.6 0 0 1-.6.6H9l-1.4 2-1.4-2H1a.6.6 0 0 1-.6-.6V3.1a.6.6 0 0 1 .6-.6z" fill="#f6f6f6" stroke="#a4a4a4" stroke-width="0.9"/><text x="2.8" y="10.4" textLength="9.6" lengthAdjust="spacingAndGlyphs" font-family="DejaVu Sans,sans-serif" font-weight="bold" font-size="9.6" fill="#5a5a5a">a·z</text></svg>
<svg style="left:730px;top:50px" width="16" height="16" viewBox="0 0 16 16"><path d="M0.6 4.6L8 1.2l7.4 3.4v6.6L8 14.8 0.6 11.2z" fill="#e9e9e9" stroke="#a6a6a6" stroke-width="0.9" stroke-linejoin="round"/><path d="M8 8.4l7.4-3.8v6.6L8 14.8z" fill="#d2d2d2"/><path d="M0.6 4.6L8 8.4l7.4-3.8M8 8.4v6.4" stroke="#b4b4b4" stroke-width="0.7" fill="none"/><path d="M6.2 1.2v1.3a1.8.8 0 0 0 3.6 0V1.2" fill="#f2f2f2" stroke="#b0b0b0" stroke-width="0.6"/><ellipse cx="8" cy="1.2" rx="1.8" ry="0.8" fill="#fbfbfb" stroke="#b0b0b0" stroke-width="0.6"/><path d="M2.4 3.4v1.3a1.8.8 0 0 0 3.6 0V3.4" fill="#f2f2f2" stroke="#b0b0b0" stroke-width="0.6"/><ellipse cx="4.2" cy="3.4" rx="1.8" ry="0.8" fill="#fbfbfb" stroke="#b0b0b0" stroke-width="0.6"/><path d="M10 3.4v1.3a1.8.8 0 0 0 3.6 0V3.4" fill="#f2f2f2" stroke="#b0b0b0" stroke-width="0.6"/><ellipse cx="11.8" cy="3.4" rx="1.8" ry="0.8" fill="#fbfbfb" stroke="#b0b0b0" stroke-width="0.6"/><path d="M6.2 5.4v1.3a1.8.8 0 0 0 3.6 0V5.4" fill="#f2f2f2" stroke="#b0b0b0" stroke-width="0.6"/><ellipse cx="8" cy="5.4" rx="1.8" ry="0.8" fill="#fbfbfb" stroke="#b0b0b0" stroke-width="0.6"/></svg>
<svg style="left:760px;top:50px" width="16" height="16" viewBox="0 0 16 16"><path d="M0.3 1.6L1.6 0.3L5.1 3.8L6.5 2.4V6.5H2.4L3.8 5.1z" fill="#6cc6f2" stroke="#2a86cc" stroke-width="0.4" stroke-linejoin="round" transform="translate(8 8) scale(1 1) translate(-8 -8)"/><path d="M0.3 1.6L1.6 0.3L5.1 3.8L6.5 2.4V6.5H2.4L3.8 5.1z" fill="#6cc6f2" stroke="#2a86cc" stroke-width="0.4" stroke-linejoin="round" transform="translate(8 8) scale(-1 1) translate(-8 -8)"/><path d="M0.3 1.6L1.6 0.3L5.1 3.8L6.5 2.4V6.5H2.4L3.8 5.1z" fill="#2a86d0" stroke="#2a86cc" stroke-width="0.4" stroke-linejoin="round" transform="translate(8 8) scale(1 -1) translate(-8 -8)"/><path d="M0.3 1.6L1.6 0.3L5.1 3.8L6.5 2.4V6.5H2.4L3.8 5.1z" fill="#2a86d0" stroke="#2a86cc" stroke-width="0.4" stroke-linejoin="round" transform="translate(8 8) scale(-1 -1) translate(-8 -8)"/></svg>
<svg style="left:790px;top:50px" width="16" height="16" viewBox="0 0 16 16"><path d="M0.6 0.6H5.2L3.6 2.2L6.9 5.5L5.5 6.9L2.2 3.6L0.6 5.2z" fill="#6cc6f2" stroke="#2a86cc" stroke-width="0.4" stroke-linejoin="round" transform="translate(8 8) scale(1 1) translate(-8 -8)"/><path d="M0.6 0.6H5.2L3.6 2.2L6.9 5.5L5.5 6.9L2.2 3.6L0.6 5.2z" fill="#6cc6f2" stroke="#2a86cc" stroke-width="0.4" stroke-linejoin="round" transform="translate(8 8) scale(-1 1) translate(-8 -8)"/><path d="M0.6 0.6H5.2L3.6 2.2L6.9 5.5L5.5 6.9L2.2 3.6L0.6 5.2z" fill="#2a86d0" stroke="#2a86cc" stroke-width="0.4" stroke-linejoin="round" transform="translate(8 8) scale(1 -1) translate(-8 -8)"/><path d="M0.6 0.6H5.2L3.6 2.2L6.9 5.5L5.5 6.9L2.2 3.6L0.6 5.2z" fill="#2a86d0" stroke="#2a86cc" stroke-width="0.4" stroke-linejoin="round" transform="translate(8 8) scale(-1 -1) translate(-8 -8)"/></svg>
<div class="a" style="left:817px;top:48px;width:1px;height:21px;background:#d2d2d2"></div>
<svg style="left:827px;top:50px" width="16" height="16" viewBox="0 0 16 16"><path d="M1.7 14.3L9.6 6.4" stroke="#868686" stroke-width="2.8" stroke-linecap="round"/><path d="M13.99 4.27A2.6 2.6 0 1 1 11.63 1.91" fill="none" stroke="#868686" stroke-width="2.7"/><path d="M1.7 14.3L9.8 6.2" stroke="#dcdcdc" stroke-width="1.1" stroke-linecap="round"/><path d="M13.99 4.27A2.6 2.6 0 1 1 11.63 1.91" fill="none" stroke="#cfcfcf" stroke-width="1"/></svg>
<svg style="left:851px;top:50px" width="4" height="19" viewBox="0 0 4 19"><rect x="0" y="0" width="1" height="1" fill="#c6c4c2"/><rect x="3" y="0" width="1" height="1" fill="#c6c4c2"/><rect x="0" y="3" width="1" height="1" fill="#c6c4c2"/><rect x="3" y="3" width="1" height="1" fill="#c6c4c2"/><rect x="0" y="6" width="1" height="1" fill="#c6c4c2"/><rect x="3" y="6" width="1" height="1" fill="#c6c4c2"/><rect x="0" y="9" width="1" height="1" fill="#c6c4c2"/><rect x="3" y="9" width="1" height="1" fill="#c6c4c2"/><rect x="0" y="12" width="1" height="1" fill="#c6c4c2"/><rect x="3" y="12" width="1" height="1" fill="#c6c4c2"/><rect x="0" y="15" width="1" height="1" fill="#c6c4c2"/><rect x="3" y="15" width="1" height="1" fill="#c6c4c2"/></svg>
<svg style="left:865px;top:50.5px" width="16" height="15" viewBox="0 0 16 15"><g transform="translate(0 0)"><rect x="0.5" y="0.5" width="6" height="5.5" rx="1" fill="#fafafa" stroke="#9c9c9c" stroke-width="1"/><rect x="0.5" y="0.5" width="6" height="2.2" rx="0.8" fill="#b8b8b8" stroke="#9c9c9c" stroke-width="1"/></g><g transform="translate(8 0)"><rect x="0.5" y="0.5" width="6" height="5.5" rx="1" fill="#fafafa" stroke="#9c9c9c" stroke-width="1"/><rect x="0.5" y="0.5" width="6" height="2.2" rx="0.8" fill="#b8b8b8" stroke="#9c9c9c" stroke-width="1"/></g><g transform="translate(0 8)"><rect x="0.5" y="0.5" width="6" height="5.5" rx="1" fill="#fafafa" stroke="#9c9c9c" stroke-width="1"/><rect x="0.5" y="0.5" width="6" height="2.2" rx="0.8" fill="#b8b8b8" stroke="#9c9c9c" stroke-width="1"/></g><g transform="translate(8 8)"><rect x="0.5" y="0.5" width="6" height="5.5" rx="1" fill="#fafafa" stroke="#9c9c9c" stroke-width="1"/><rect x="0.5" y="0.5" width="6" height="2.2" rx="0.8" fill="#b8b8b8" stroke="#9c9c9c" stroke-width="1"/></g></svg>
<svg style="left:895px;top:51px" width="16" height="14" viewBox="0 0 16 14"><g transform="translate(0 0)"><rect x="0.5" y="0.5" width="6" height="12" rx="1" fill="#fafafa" stroke="#9c9c9c" stroke-width="1"/><rect x="0.5" y="0.5" width="6" height="2.2" rx="0.8" fill="#b8b8b8" stroke="#9c9c9c" stroke-width="1"/></g><g transform="translate(8 0)"><rect x="0.5" y="0.5" width="6" height="12" rx="1" fill="#fafafa" stroke="#9c9c9c" stroke-width="1"/><rect x="0.5" y="0.5" width="6" height="2.2" rx="0.8" fill="#b8b8b8" stroke="#9c9c9c" stroke-width="1"/></g></svg>
<svg style="left:925px;top:50.5px" width="16" height="15" viewBox="0 0 16 15"><g transform="translate(0 0)"><rect x="0.5" y="0.5" width="15" height="5.5" rx="1" fill="#fafafa" stroke="#9c9c9c" stroke-width="1"/><rect x="0.5" y="0.5" width="15" height="2.2" rx="0.8" fill="#b8b8b8" stroke="#9c9c9c" stroke-width="1"/></g><g transform="translate(0 8)"><rect x="0.5" y="0.5" width="15" height="5.5" rx="1" fill="#fafafa" stroke="#9c9c9c" stroke-width="1"/><rect x="0.5" y="0.5" width="15" height="2.2" rx="0.8" fill="#b8b8b8" stroke="#9c9c9c" stroke-width="1"/></g></svg>
<svg style="left:959px;top:56px" width="8" height="6" viewBox="0 0 8 6"><path d="M0.8 0.4L3.6 3L0.8 5.6M4.6 0.4L7.4 3L4.6 5.6" fill="none" stroke="#111" stroke-width="1.6"/></svg>
<svg style="left:13px;top:111px" width="14" height="14" viewBox="0 0 14 14"><rect x="0.5" y="0.5" width="13" height="13" rx="2.6" fill="url(#gB)" stroke="#2a44a4" stroke-width="1"/><path d="M2 1.6h10" stroke="#fff" stroke-width="0.9" opacity="0.35"/><path d="M3.4 6.4a3.8 3.8 0 0 1 6.6-1.8M10.6 7.6a3.8 3.8 0 0 1-6.6 1.8" fill="none" stroke="#fff" stroke-width="1.4"/><path d="M11.2 2.6v3.2H8zM2.8 11.4V8.2H6z" fill="#fff"/></svg>
<svg style="left:50px;top:111px" width="14" height="14" viewBox="0 0 14 14"><rect x="0.5" y="0.5" width="13" height="13" rx="2.6" fill="url(#gG2)" stroke="#1d8a2a" stroke-width="1"/><path d="M2 1.6h10" stroke="#fff" stroke-width="0.9" opacity="0.35"/><path d="M3.2 7.2l2.8 2.8 5-5.4" fill="none" stroke="#e6fbe6" stroke-width="1.8"/></svg>
<svg style="left:80px;top:111px" width="14" height="14" viewBox="0 0 14 14"><rect x="0.5" y="0.5" width="13" height="13" rx="2.6" fill="url(#gR)" stroke="#961212" stroke-width="1"/><path d="M2 1.6h10" stroke="#fff" stroke-width="0.9" opacity="0.35"/><path d="M3.8 3.8l6.4 6.4M10.2 3.8l-6.4 6.4" stroke="#fff" stroke-width="2.3"/><circle cx="7" cy="7" r="1.5" fill="#c8c8c8"/></svg>
<svg style="left:109px;top:110px" width="16" height="16" viewBox="0 0 16 16"><g transform="translate(0 0)"><rect x="0.5" y="0.5" width="14" height="13.7" fill="#eefaff" stroke="#9a9ea2" stroke-width="1"/><rect x="2" y="2" width="11" height="10.7" fill="#9cdcf6"/><rect x="2" y="2" width="11" height="2.7" fill="#38b0ea"/><rect x="2" y="4.7" width="2.8" height="7.999999999999999" fill="#5cc6f2"/><rect x="5.20" y="2.9" width="1.63" height="1" fill="#5cc6f2" opacity="0.8"/><rect x="5.20" y="5.20" width="1.73" height="1.3" fill="#ffffff"/><rect x="5.20" y="7.20" width="1.73" height="1.3" fill="#ffffff"/><rect x="5.20" y="9.20" width="1.73" height="1.3" fill="#ffffff"/><rect x="5.20" y="11.20" width="1.73" height="1.3" fill="#ffffff"/><rect x="7.83" y="2.9" width="1.63" height="1" fill="#5cc6f2" opacity="0.8"/><rect x="7.83" y="5.20" width="1.73" height="1.3" fill="#ffffff"/><rect x="7.83" y="7.20" width="1.73" height="1.3" fill="#ffffff"/><rect x="7.83" y="9.20" width="1.73" height="1.3" fill="#ffffff"/><rect x="7.83" y="11.20" width="1.73" height="1.3" fill="#ffffff"/><rect x="10.47" y="2.9" width="1.63" height="1" fill="#5cc6f2" opacity="0.8"/><rect x="10.47" y="5.20" width="1.73" height="1.3" fill="#ffffff"/><rect x="10.47" y="7.20" width="1.73" height="1.3" fill="#ffffff"/><rect x="10.47" y="9.20" width="1.73" height="1.3" fill="#ffffff"/><rect x="10.47" y="11.20" width="1.73" height="1.3" fill="#ffffff"/><rect x="2.7" y="5.20" width="1.3" height="1.3" fill="#9cdcf6" opacity="0.7"/><rect x="2.7" y="7.20" width="1.3" height="1.3" fill="#9cdcf6" opacity="0.7"/><rect x="2.7" y="9.20" width="1.3" height="1.3" fill="#9cdcf6" opacity="0.7"/><rect x="2.7" y="11.20" width="1.3" height="1.3" fill="#9cdcf6" opacity="0.7"/></g><rect x="6.9" y="2.4" width="3.1" height="10.6" fill="url(#gG2)" stroke="#1d8528" stroke-width="0.5"/><path d="M6.6 0.3h3.8L8.5 2.4z" fill="#2a5a2a"/></svg>
<svg style="left:139px;top:110px" width="16" height="16" viewBox="0 0 16 16"><g transform="translate(0 0)"><rect x="0.5" y="0.5" width="14" height="13.7" fill="#eefaff" stroke="#9a9ea2" stroke-width="1"/><rect x="2" y="2" width="11" height="10.7" fill="#9cdcf6"/><rect x="2" y="2" width="11" height="2.7" fill="#38b0ea"/><rect x="2" y="4.7" width="2.8" height="7.999999999999999" fill="#5cc6f2"/><rect x="5.20" y="2.9" width="1.63" height="1" fill="#5cc6f2" opacity="0.8"/><rect x="5.20" y="5.20" width="1.73" height="1.3" fill="#ffffff"/><rect x="5.20" y="7.20" width="1.73" height="1.3" fill="#ffffff"/><rect x="5.20" y="9.20" width="1.73" height="1.3" fill="#ffffff"/><rect x="5.20" y="11.20" width="1.73" height="1.3" fill="#ffffff"/><rect x="7.83" y="2.9" width="1.63" height="1" fill="#5cc6f2" opacity="0.8"/><rect x="7.83" y="5.20" width="1.73" height="1.3" fill="#ffffff"/><rect x="7.83" y="7.20" width="1.73" height="1.3" fill="#ffffff"/><rect x="7.83" y="9.20" width="1.73" height="1.3" fill="#ffffff"/><rect x="7.83" y="11.20" width="1.73" height="1.3" fill="#ffffff"/><rect x="10.47" y="2.9" width="1.63" height="1" fill="#5cc6f2" opacity="0.8"/><rect x="10.47" y="5.20" width="1.73" height="1.3" fill="#ffffff"/><rect x="10.47" y="7.20" width="1.73" height="1.3" fill="#ffffff"/><rect x="10.47" y="9.20" width="1.73" height="1.3" fill="#ffffff"/><rect x="10.47" y="11.20" width="1.73" height="1.3" fill="#ffffff"/><rect x="2.7" y="5.20" width="1.3" height="1.3" fill="#9cdcf6" opacity="0.7"/><rect x="2.7" y="7.20" width="1.3" height="1.3" fill="#9cdcf6" opacity="0.7"/><rect x="2.7" y="9.20" width="1.3" height="1.3" fill="#9cdcf6" opacity="0.7"/><rect x="2.7" y="11.20" width="1.3" height="1.3" fill="#9cdcf6" opacity="0.7"/></g><rect x="7.2" y="2.2" width="3.6" height="11" fill="#a9c4f4" stroke="#1e2c7c" stroke-width="1"/><path d="M9 4.6v8" stroke="#e8f0ff" stroke-width="1" stroke-dasharray="1.5 0.9"/><path d="M7.4 14L13.4 8.2" stroke="#b48a20" stroke-width="2"/><path d="M7.4 14L13.4 8.2" stroke="#f6e67c" stroke-width="1.1"/><path d="M13.1 8.5L14.7 7" stroke="#d2666e" stroke-width="2"/><path d="M13.1 8.5L14.7 7" stroke="#f0a0a4" stroke-width="0.8"/><path d="M6 15.4l0.8-2 1.3 1.3z" fill="#111"/></svg>
<svg style="left:169px;top:110px" width="16" height="16" viewBox="0 0 16 16"><g transform="translate(0 0)"><rect x="0.5" y="0.5" width="14" height="13.7" fill="#eefaff" stroke="#9a9ea2" stroke-width="1"/><rect x="2" y="2" width="11" height="10.7" fill="#9cdcf6"/><rect x="2" y="2" width="11" height="2.7" fill="#38b0ea"/><rect x="2" y="4.7" width="2.8" height="7.999999999999999" fill="#5cc6f2"/><rect x="5.20" y="2.9" width="1.63" height="1" fill="#5cc6f2" opacity="0.8"/><rect x="5.20" y="5.20" width="1.73" height="1.3" fill="#ffffff"/><rect x="5.20" y="7.20" width="1.73" height="1.3" fill="#ffffff"/><rect x="5.20" y="9.20" width="1.73" height="1.3" fill="#ffffff"/><rect x="5.20" y="11.20" width="1.73" height="1.3" fill="#ffffff"/><rect x="7.83" y="2.9" width="1.63" height="1" fill="#5cc6f2" opacity="0.8"/><rect x="7.83" y="5.20" width="1.73" height="1.3" fill="#ffffff"/><rect x="7.83" y="7.20" width="1.73" height="1.3" fill="#ffffff"/><rect x="7.83" y="9.20" width="1.73" height="1.3" fill="#ffffff"/><rect x="7.83" y="11.20" width="1.73" height="1.3" fill="#ffffff"/><rect x="10.47" y="2.9" width="1.63" height="1" fill="#5cc6f2" opacity="0.8"/><rect x="10.47" y="5.20" width="1.73" height="1.3" fill="#ffffff"/><rect x="10.47" y="7.20" width="1.73" height="1.3" fill="#ffffff"/><rect x="10.47" y="9.20" width="1.73" height="1.3" fill="#ffffff"/><rect x="10.47" y="11.20" width="1.73" height="1.3" fill="#ffffff"/><rect x="2.7" y="5.20" width="1.3" height="1.3" fill="#9cdcf6" opacity="0.7"/><rect x="2.7" y="7.20" width="1.3" height="1.3" fill="#9cdcf6" opacity="0.7"/><rect x="2.7" y="9.20" width="1.3" height="1.3" fill="#9cdcf6" opacity="0.7"/><rect x="2.7" y="11.20" width="1.3" height="1.3" fill="#9cdcf6" opacity="0.7"/></g><rect x="6.9" y="2.4" width="3.1" height="11.6" rx="0.8" fill="url(#gR)" stroke="#961212" stroke-width="0.5"/><path d="M6.8 0.5h3.4L8.5 2.2z" fill="#b02020"/></svg>
<svg style="left:200px;top:111px" width="14" height="14" viewBox="0 0 14 14"><rect x="0.5" y="0.5" width="13" height="13" rx="2.6" fill="url(#gB)" stroke="#2a44a4" stroke-width="1"/><path d="M2 1.6h10" stroke="#fff" stroke-width="0.9" opacity="0.35"/><path d="M7 11V4.6M3.8 7L7 3.6l3.2 3.4" fill="none" stroke="#fff" stroke-width="1.9" stroke-linejoin="miter"/></svg>
<svg style="left:230px;top:111px" width="14" height="14" viewBox="0 0 14 14"><rect x="0.5" y="0.5" width="13" height="13" rx="2.6" fill="url(#gB)" stroke="#2a44a4" stroke-width="1"/><path d="M2 1.6h10" stroke="#fff" stroke-width="0.9" opacity="0.35"/><path d="M7 3v6.4M3.8 7L7 10.4l3.2-3.4" fill="none" stroke="#fff" stroke-width="1.9" stroke-linejoin="miter"/></svg>
<svg style="left:266px;top:110px" width="16" height="16" viewBox="0 0 16 16"><rect x="4.4" y="4.4" width="7.2" height="7.2" fill="#e4f3fb" stroke="#5ab2e4" stroke-width="0.7"/><path d="M4.4 6.8h7.2M4.4 9.2h7.2M6.8 4.4v7.2M9.2 4.4v7.2" stroke="#5ab2e4" stroke-width="0.6"/><g transform="translate(8 8) scale(1 1) translate(-8 -8)"><path d="M0.7 0.7L4.6 4.6" stroke="#5ab8ec" stroke-width="1.5"/><path d="M6.1 2.5V6.1H2.5z" fill="#5ab8ec"/></g><g transform="translate(8 8) scale(-1 1) translate(-8 -8)"><path d="M0.7 0.7L4.6 4.6" stroke="#5ab8ec" stroke-width="1.5"/><path d="M6.1 2.5V6.1H2.5z" fill="#5ab8ec"/></g><g transform="translate(8 8) scale(1 -1) translate(-8 -8)"><path d="M0.7 0.7L4.6 4.6" stroke="#2a86d0" stroke-width="1.5"/><path d="M6.1 2.5V6.1H2.5z" fill="#2a86d0"/></g><g transform="translate(8 8) scale(-1 -1) translate(-8 -8)"><path d="M0.7 0.7L4.6 4.6" stroke="#2a86d0" stroke-width="1.5"/><path d="M6.1 2.5V6.1H2.5z" fill="#2a86d0"/></g></svg>
<svg style="left:296px;top:110px" width="16" height="16" viewBox="0 0 16 16"><rect x="4.4" y="4.4" width="7.2" height="7.2" fill="#e4f3fb" stroke="#5ab2e4" stroke-width="0.7"/><path d="M4.4 6.8h7.2M4.4 9.2h7.2M6.8 4.4v7.2M9.2 4.4v7.2" stroke="#5ab2e4" stroke-width="0.6"/><g transform="translate(8 8) scale(1 1) translate(-8 -8)"><path d="M1.6 1.6L5.4 5.4" stroke="#5ab8ec" stroke-width="1.6"/><path d="M0.3 0.3H4.6L0.3 4.6z" fill="#5ab8ec"/></g><g transform="translate(8 8) scale(-1 1) translate(-8 -8)"><path d="M1.6 1.6L5.4 5.4" stroke="#5ab8ec" stroke-width="1.6"/><path d="M0.3 0.3H4.6L0.3 4.6z" fill="#5ab8ec"/></g><g transform="translate(8 8) scale(1 -1) translate(-8 -8)"><path d="M1.6 1.6L5.4 5.4" stroke="#2a86d0" stroke-width="1.6"/><path d="M0.3 0.3H4.6L0.3 4.6z" fill="#2a86d0"/></g><g transform="translate(8 8) scale(-1 -1) translate(-8 -8)"><path d="M1.6 1.6L5.4 5.4" stroke="#2a86d0" stroke-width="1.6"/><path d="M0.3 0.3H4.6L0.3 4.6z" fill="#2a86d0"/></g></svg>
<svg style="left:326px;top:110px" width="16" height="16" viewBox="0 0 16 16"><rect x="2.5" y="1.5" width="13" height="13" fill="#f4f4f4" stroke="#a8a8a8" stroke-width="1"/><rect x="4.5" y="3.5" width="9" height="9" fill="#dbe6f4"/><path d="M13.5 12.5h-7c3.5-.5 5-3.5 4-7.5 2.8 1.8 3.4 4.6 3 7.5z" fill="#3f6fc6"/><path d="M9.5 6c2.6 1 3.6 3.4 2.6 6" fill="none" stroke="#2b55ac" stroke-width="1.4"/><path d="M1 5.6L4.6 2.2 8.8 5.4 5.2 9.6z" fill="#d4d4d4" stroke="#777" stroke-width="0.8" stroke-linejoin="round"/><path d="M3.2 3.2c-.4-2.4 2-3 2.6-1.2l.6 2" fill="none" stroke="#777" stroke-width="0.8"/></svg>
<svg style="left:363px;top:110px" width="16" height="16" viewBox="0 0 16 16"><rect x="5.5" y="0.5" width="10" height="9.5" fill="#fbfbfb" stroke="#a4a4a4" stroke-width="0.9"/><rect x="3" y="2.5" width="10.5" height="10" fill="#fbfbfb" stroke="#a4a4a4" stroke-width="0.9"/><g transform="translate(0.2 4.6)"><rect x="0.5" y="0.5" width="10.5" height="9.5" fill="#eefaff" stroke="#9a9ea2" stroke-width="1"/><rect x="2" y="2" width="7.5" height="6.5" fill="#9cdcf6"/><rect x="2" y="2" width="7.5" height="2.7" fill="#38b0ea"/><rect x="2" y="4.7" width="2.8" height="3.8" fill="#5cc6f2"/><rect x="5.20" y="2.9" width="1.20" height="1" fill="#5cc6f2" opacity="0.8"/><rect x="5.20" y="5.20" width="1.30" height="1.3" fill="#ffffff"/><rect x="5.20" y="7.20" width="1.30" height="1.3" fill="#ffffff"/><rect x="7.40" y="2.9" width="1.20" height="1" fill="#5cc6f2" opacity="0.8"/><rect x="7.40" y="5.20" width="1.30" height="1.3" fill="#ffffff"/><rect x="7.40" y="7.20" width="1.30" height="1.3" fill="#ffffff"/><rect x="2.7" y="5.20" width="1.3" height="1.3" fill="#9cdcf6" opacity="0.7"/><rect x="2.7" y="7.20" width="1.3" height="1.3" fill="#9cdcf6" opacity="0.7"/></g></svg>
<svg style="left:393.5px;top:110.5px" width="16" height="14" viewBox="0 0 16 14"><path d="M6 0.6L0.8 4.6 6 8.6V6h4.2a2 2 0 0 1 0 4.2H2v3.2h8.4a5.2 5.2 0 0 0 0-10.4H6z" fill="url(#gA)" stroke="#1f78c0" stroke-width="0.8" stroke-linejoin="round"/></svg>
<svg style="left:12px;top:396px" width="16" height="16" viewBox="0 0 16 16"><g transform="translate(0 2)"><rect x="0.5" y="0.5" width="14" height="12" fill="#eefaff" stroke="#9a9ea2" stroke-width="1"/><rect x="2" y="2" width="11" height="9" fill="#9cdcf6"/><rect x="2" y="2" width="11" height="2.7" fill="#38b0ea"/><rect x="2" y="4.7" width="2.8" height="6.3" fill="#5cc6f2"/><rect x="5.20" y="2.9" width="1.63" height="1" fill="#5cc6f2" opacity="0.8"/><rect x="5.20" y="5.20" width="1.73" height="1.3" fill="#ffffff"/><rect x="5.20" y="7.20" width="1.73" height="1.3" fill="#ffffff"/><rect x="5.20" y="9.20" width="1.73" height="1.3" fill="#ffffff"/><rect x="7.83" y="2.9" width="1.63" height="1" fill="#5cc6f2" opacity="0.8"/><rect x="7.83" y="5.20" width="1.73" height="1.3" fill="#ffffff"/><rect x="7.83" y="7.20" width="1.73" height="1.3" fill="#ffffff"/><rect x="7.83" y="9.20" width="1.73" height="1.3" fill="#ffffff"/><rect x="10.47" y="2.9" width="1.63" height="1" fill="#5cc6f2" opacity="0.8"/><rect x="10.47" y="5.20" width="1.73" height="1.3" fill="#ffffff"/><rect x="10.47" y="7.20" width="1.73" height="1.3" fill="#ffffff"/><rect x="10.47" y="9.20" width="1.73" height="1.3" fill="#ffffff"/><rect x="2.7" y="5.20" width="1.3" height="1.3" fill="#9cdcf6" opacity="0.7"/><rect x="2.7" y="7.20" width="1.3" height="1.3" fill="#9cdcf6" opacity="0.7"/><rect x="2.7" y="9.20" width="1.3" height="1.3" fill="#9cdcf6" opacity="0.7"/></g><path d="M4.4 4.8L8.4 1.2l6-.4 1.6 1.4-.2 2.6-3.2 2-2.8.6-2.4.2-2.4-1.2z" fill="#f0b272" stroke="#c48a48" stroke-width="0.7" stroke-linejoin="round"/><path d="M6.6 4.6l2.8-2.4M8.6 5.6l2.8-2.4M10.6 6l2.4-2.2M7.6 2.8l2.8 3.2M10 2l2.8 3" stroke="#c48a48" stroke-width="0.5"/><circle cx="12.4" cy="11.4" r="3.3" fill="url(#gG)" stroke="#1f7f2b" stroke-width="0.7"/><path d="M10.2 11.4H14.600000000000001M12.4 9.2V13.600000000000001" stroke="#dcf8dc" stroke-width="1.25"/></svg>
<svg style="left:42px;top:396px" width="16" height="16" viewBox="0 0 16 16"><g transform="translate(0 0.5)"><rect x="0.5" y="0.5" width="15" height="13.5" fill="#f6f6f6" stroke="#c0c0c0" stroke-width="1"/><rect x="2" y="2" width="12" height="10.5" fill="#e2e2e2"/><rect x="2" y="2" width="12" height="2.7" fill="#cccccc"/><rect x="2" y="4.7" width="2.8" height="7.8" fill="#dadada"/><rect x="5.20" y="2.9" width="1.97" height="1" fill="#dadada" opacity="0.8"/><rect x="5.20" y="5.20" width="2.07" height="1.3" fill="#f8f8f8"/><rect x="5.20" y="7.20" width="2.07" height="1.3" fill="#f8f8f8"/><rect x="5.20" y="9.20" width="2.07" height="1.3" fill="#f8f8f8"/><rect x="5.20" y="11.20" width="2.07" height="1.3" fill="#f8f8f8"/><rect x="8.17" y="2.9" width="1.97" height="1" fill="#dadada" opacity="0.8"/><rect x="8.17" y="5.20" width="2.07" height="1.3" fill="#f8f8f8"/><rect x="8.17" y="7.20" width="2.07" height="1.3" fill="#f8f8f8"/><rect x="8.17" y="9.20" width="2.07" height="1.3" fill="#f8f8f8"/><rect x="8.17" y="11.20" width="2.07" height="1.3" fill="#f8f8f8"/><rect x="11.13" y="2.9" width="1.97" height="1" fill="#dadada" opacity="0.8"/><rect x="11.13" y="5.20" width="2.07" height="1.3" fill="#f8f8f8"/><rect x="11.13" y="7.20" width="2.07" height="1.3" fill="#f8f8f8"/><rect x="11.13" y="9.20" width="2.07" height="1.3" fill="#f8f8f8"/><rect x="11.13" y="11.20" width="2.07" height="1.3" fill="#f8f8f8"/><rect x="2.7" y="5.20" width="1.3" height="1.3" fill="#e2e2e2" opacity="0.7"/><rect x="2.7" y="7.20" width="1.3" height="1.3" fill="#e2e2e2" opacity="0.7"/><rect x="2.7" y="9.20" width="1.3" height="1.3" fill="#e2e2e2" opacity="0.7"/><rect x="2.7" y="11.20" width="1.3" height="1.3" fill="#e2e2e2" opacity="0.7"/></g><path d="M4.4 4.8L8.4 1.2l6-.4 1.6 1.4-.2 2.6-3.2 2-2.8.6-2.4.2-2.4-1.2z" fill="#e6e6e6" stroke="#bcbcbc" stroke-width="0.7" stroke-linejoin="round"/><path d="M6.6 4.6l2.8-2.4M8.6 5.6l2.8-2.4M10.6 6l2.4-2.2M7.6 2.8l2.8 3.2M10 2l2.8 3" stroke="#bcbcbc" stroke-width="0.5"/><path d="M7.2 13.8L14.5 6.8" stroke="#b4b4b4" stroke-width="2.3"/><path d="M7.2 13.8L14.5 6.8" stroke="#e6e6e6" stroke-width="1"/><path d="M5.8 15.2l0.8-2.1 1.4 1.4z" fill="#666"/></svg>
<svg style="left:72px;top:396px" width="16" height="16" viewBox="0 0 16 16"><g transform="translate(0 0.5)"><rect x="0.5" y="0.5" width="15" height="13.5" fill="#f6f6f6" stroke="#c0c0c0" stroke-width="1"/><rect x="2" y="2" width="12" height="10.5" fill="#e2e2e2"/><rect x="2" y="2" width="12" height="2.7" fill="#cccccc"/><rect x="2" y="4.7" width="2.8" height="7.8" fill="#dadada"/><rect x="5.20" y="2.9" width="1.97" height="1" fill="#dadada" opacity="0.8"/><rect x="5.20" y="5.20" width="2.07" height="1.3" fill="#f8f8f8"/><rect x="5.20" y="7.20" width="2.07" height="1.3" fill="#f8f8f8"/><rect x="5.20" y="9.20" width="2.07" height="1.3" fill="#f8f8f8"/><rect x="5.20" y="11.20" width="2.07" height="1.3" fill="#f8f8f8"/><rect x="8.17" y="2.9" width="1.97" height="1" fill="#dadada" opacity="0.8"/><rect x="8.17" y="5.20" width="2.07" height="1.3" fill="#f8f8f8"/><rect x="8.17" y="7.20" width="2.07" height="1.3" fill="#f8f8f8"/><rect x="8.17" y="9.20" width="2.07" height="1.3" fill="#f8f8f8"/><rect x="8.17" y="11.20" width="2.07" height="1.3" fill="#f8f8f8"/><rect x="11.13" y="2.9" width="1.97" height="1" fill="#dadada" opacity="0.8"/><rect x="11.13" y="5.20" width="2.07" height="1.3" fill="#f8f8f8"/><rect x="11.13" y="7.20" width="2.07" height="1.3" fill="#f8f8f8"/><rect x="11.13" y="9.20" width="2.07" height="1.3" fill="#f8f8f8"/><rect x="11.13" y="11.20" width="2.07" height="1.3" fill="#f8f8f8"/><rect x="2.7" y="5.20" width="1.3" height="1.3" fill="#e2e2e2" opacity="0.7"/><rect x="2.7" y="7.20" width="1.3" height="1.3" fill="#e2e2e2" opacity="0.7"/><rect x="2.7" y="9.20" width="1.3" height="1.3" fill="#e2e2e2" opacity="0.7"/><rect x="2.7" y="11.20" width="1.3" height="1.3" fill="#e2e2e2" opacity="0.7"/></g><rect x="6.6" y="2.2" width="3" height="13.2" rx="0.8" fill="#bcbcbc" stroke="#a4a4a4" stroke-width="0.7"/><path d="M6.6 0.6h3L8.1 2.2z" fill="#a0a0a0"/></svg>
<svg style="left:103px;top:397px" width="14" height="14" viewBox="0 0 14 14"><rect x="0.5" y="0.5" width="13" height="13" rx="2.6" fill="url(#gY)" stroke="#8e8e8e" stroke-width="1"/><path d="M2 1.6h10" stroke="#fff" stroke-width="0.9" opacity="0.35"/><path d="M7 11V4.6M3.8 7L7 3.6l3.2 3.4" fill="none" stroke="#fff" stroke-width="2.2"/></svg>
<svg style="left:133px;top:397px" width="14" height="14" viewBox="0 0 14 14"><rect x="0.5" y="0.5" width="13" height="13" rx="2.6" fill="url(#gY)" stroke="#8e8e8e" stroke-width="1"/><path d="M2 1.6h10" stroke="#fff" stroke-width="0.9" opacity="0.35"/><path d="M7 3v6.4M3.8 7L7 10.4l3.2-3.4" fill="none" stroke="#fff" stroke-width="2.2"/></svg>
<svg style="left:170px;top:396px" width="16" height="16" viewBox="0 0 16 16"><g transform="translate(2 0.2)"><path d="M3.5 7.6h3.2v1.8l-.9.8.9.8v.8l-.9.8.9.8v1.2l-1.5 1.2-1.7-1.2z" fill="url(#gK)" stroke="#b88c1c" stroke-width="0.8" stroke-linejoin="round"/><ellipse cx="5" cy="4.3" rx="4.6" ry="4" fill="url(#gK)" stroke="#c8a028" stroke-width="0.9"/><ellipse cx="5" cy="2.8" rx="2.2" ry="0.9" fill="#fff6c0" stroke="#c8a028" stroke-width="0.6"/></g><circle cx="11.3" cy="11.5" r="3.3" fill="url(#gG)" stroke="#1f7f2b" stroke-width="0.7"/><path d="M9.100000000000001 11.5H13.5M11.3 9.3V13.7" stroke="#dcf8dc" stroke-width="1.25"/></svg>
<svg style="left:199px;top:396px" width="16" height="16" viewBox="0 0 16 16"><rect x="0.5" y="4.5" width="6" height="10" fill="#fff" stroke="#9cb4c4" stroke-width="0.8"/><rect x="1" y="5" width="5" height="2.4" fill="#6cc0ea"/><path d="M1.6 9h3.8M1.6 11h3.8M1.6 13h3.8" stroke="#9ccfe8" stroke-width="0.9"/><rect x="9.5" y="0.5" width="6" height="9" fill="#fff" stroke="#9cb4c4" stroke-width="0.8"/><rect x="10" y="1" width="5" height="2.4" fill="#6cc0ea"/><path d="M10.6 5h3.8M10.6 7h3.8" stroke="#9ccfe8" stroke-width="0.9"/><path d="M6.5 9L9.5 4" stroke="#8a8a8a" stroke-width="0.8"/><circle cx="12.3" cy="11.5" r="3.3" fill="url(#gG)" stroke="#1f7f2b" stroke-width="0.7"/><path d="M10.100000000000001 11.5H14.5M12.3 9.3V13.7" stroke="#dcf8dc" stroke-width="1.25"/></svg>
<svg style="left:229px;top:396px" width="16" height="16" viewBox="0 0 16 16"><rect x="4.5" y="0.6" width="7" height="7" rx="1.3" fill="#2f8fe0" stroke="#1c66b4" stroke-width="0.8"/><rect x="0.6" y="8" width="7" height="7" rx="1.3" fill="#d8262c" stroke="#9a1218" stroke-width="0.8"/><rect x="8.4" y="8" width="7" height="7" rx="1.3" fill="#3aa844" stroke="#1f7a2a" stroke-width="0.8"/><circle cx="12.3" cy="11.5" r="3.3" fill="url(#gG)" stroke="#1f7f2b" stroke-width="0.7"/><path d="M10.100000000000001 11.5H14.5M12.3 9.3V13.7" stroke="#dcf8dc" stroke-width="1.25"/></svg>
<svg style="left:260px;top:396px" width="16" height="16" viewBox="0 0 16 16"><rect x="0.9" y="1.8" width="12.4" height="13.4" rx="1.2" fill="#fbfbfb" stroke="#8c6e58" stroke-width="1.1"/><rect x="2.6" y="3.4" width="9" height="10.4" fill="#fff" stroke="#d8d0c8" stroke-width="0.5"/><path d="M4.4 2.8V1.4h1.4L6.2.4h1.8l.4 1h1.4v1.4z" fill="#c8c8c8" stroke="#7a7a7a" stroke-width="0.7"/><path d="M3.8 6.6l1 1 1.8-2.2M3.8 10.6l1 1 1.8-2.2" fill="none" stroke="#2e9a3a" stroke-width="1.1"/><path d="M7.8 7h2.6" stroke="#b0b0b0" stroke-width="0.9"/><circle cx="12.6" cy="11.5" r="3.3" fill="url(#gG)" stroke="#1f7f2b" stroke-width="0.7"/><path d="M10.399999999999999 11.5H14.8M12.6 9.3V13.7" stroke="#dcf8dc" stroke-width="1.25"/></svg>
<svg style="left:241px;top:196.6px" width="11" height="18" viewBox="0 0 11 18"><g transform="translate(0.4 0.2)"><path d="M3.5 7.6h3.2v1.8l-.9.8.9.8v.8l-.9.8.9.8v1.2l-1.5 1.2-1.7-1.2z" fill="url(#gK)" stroke="#b88c1c" stroke-width="0.8" stroke-linejoin="round"/><ellipse cx="5" cy="4.3" rx="4.6" ry="4" fill="url(#gK)" stroke="#c8a028" stroke-width="0.9"/><ellipse cx="5" cy="2.8" rx="2.2" ry="0.9" fill="#fff6c0" stroke="#c8a028" stroke-width="0.6"/></g></svg>
<svg style="left:540px;top:220px" width="16" height="16" viewBox="0 0 16 16"><circle cx="7.9" cy="7.9" r="7.5" fill="url(#gN)" stroke="#a88a0c" stroke-width="0.8"/><path d="M4.7 5.5C3.3 7 3.1 10 4.7 11 6.4 11.6 7.6 9.8 7.9 7.6 8 10 8.7 11.7 10.1 11.4 11.9 11 11.9 7.4 10.7 5.5" fill="none" stroke="#1c1206" stroke-width="1.9" stroke-linecap="round"/><circle cx="4.5" cy="11.5" r="2.5" fill="#fff" stroke="#d4484c" stroke-width="0.9"/><path d="M2.9 10l3.3 3" stroke="#d4484c" stroke-width="1"/></svg>
<svg style="left:540px;top:243px" width="16" height="16" viewBox="0 0 16 16"><circle cx="7.9" cy="7.9" r="7.5" fill="url(#gN)" stroke="#a88a0c" stroke-width="0.8"/><path d="M4.7 5.5C3.3 7 3.1 10 4.7 11 6.4 11.6 7.6 9.8 7.9 7.6 8 10 8.7 11.7 10.1 11.4 11.9 11 11.9 7.4 10.7 5.5" fill="none" stroke="#1c1206" stroke-width="1.9" stroke-linecap="round"/><circle cx="4.5" cy="11.5" r="2.5" fill="#fff" stroke="#d4484c" stroke-width="0.9"/><path d="M2.9 10l3.3 3" stroke="#d4484c" stroke-width="1"/></svg>
<svg style="left:5px;top:623px" width="4" height="19" viewBox="0 0 4 19"><rect x="0" y="0" width="1" height="1" fill="#c6c4c2"/><rect x="3" y="0" width="1" height="1" fill="#c6c4c2"/><rect x="0" y="3" width="1" height="1" fill="#c6c4c2"/><rect x="3" y="3" width="1" height="1" fill="#c6c4c2"/><rect x="0" y="6" width="1" height="1" fill="#c6c4c2"/><rect x="3" y="6" width="1" height="1" fill="#c6c4c2"/><rect x="0" y="9" width="1" height="1" fill="#c6c4c2"/><rect x="3" y="9" width="1" height="1" fill="#c6c4c2"/><rect x="0" y="12" width="1" height="1" fill="#c6c4c2"/><rect x="3" y="12" width="1" height="1" fill="#c6c4c2"/><rect x="0" y="15" width="1" height="1" fill="#c6c4c2"/><rect x="3" y="15" width="1" height="1" fill="#c6c4c2"/></svg>
<svg style="left:18px;top:623px" width="16" height="15" viewBox="0 0 16 15"><g transform="translate(0 0)"><rect x="0.5" y="0.5" width="15" height="13.5" fill="#eefaff" stroke="#9a9ea2" stroke-width="1"/><rect x="2" y="2" width="12" height="10.5" fill="#9cdcf6"/><rect x="2" y="2" width="12" height="2.7" fill="#38b0ea"/><rect x="2" y="4.7" width="2.8" height="7.8" fill="#5cc6f2"/><rect x="5.20" y="2.9" width="1.97" height="1" fill="#5cc6f2" opacity="0.8"/><rect x="5.20" y="5.20" width="2.07" height="1.3" fill="#ffffff"/><rect x="5.20" y="7.20" width="2.07" height="1.3" fill="#ffffff"/><rect x="5.20" y="9.20" width="2.07" height="1.3" fill="#ffffff"/><rect x="5.20" y="11.20" width="2.07" height="1.3" fill="#ffffff"/><rect x="8.17" y="2.9" width="1.97" height="1" fill="#5cc6f2" opacity="0.8"/><rect x="8.17" y="5.20" width="2.07" height="1.3" fill="#ffffff"/><rect x="8.17" y="7.20" width="2.07" height="1.3" fill="#ffffff"/><rect x="8.17" y="9.20" width="2.07" height="1.3" fill="#ffffff"/><rect x="8.17" y="11.20" width="2.07" height="1.3" fill="#ffffff"/><rect x="11.13" y="2.9" width="1.97" height="1" fill="#5cc6f2" opacity="0.8"/><rect x="11.13" y="5.20" width="2.07" height="1.3" fill="#ffffff"/><rect x="11.13" y="7.20" width="2.07" height="1.3" fill="#ffffff"/><rect x="11.13" y="9.20" width="2.07" height="1.3" fill="#ffffff"/><rect x="11.13" y="11.20" width="2.07" height="1.3" fill="#ffffff"/><rect x="2.7" y="5.20" width="1.3" height="1.3" fill="#9cdcf6" opacity="0.7"/><rect x="2.7" y="7.20" width="1.3" height="1.3" fill="#9cdcf6" opacity="0.7"/><rect x="2.7" y="9.20" width="1.3" height="1.3" fill="#9cdcf6" opacity="0.7"/><rect x="2.7" y="11.20" width="1.3" height="1.3" fill="#9cdcf6" opacity="0.7"/></g></svg>
<svg style="left:607px;top:119px" width="13" height="16" viewBox="0 0 13 16"><rect x="0.5" y="0.5" width="12" height="4.8" rx="0.9" fill="url(#gH)" stroke="#8a8a8a" stroke-width="1"/><path d="M1.4 1.5H11.6" stroke="#f6f6f6" stroke-width="0.7" opacity="0.55"/><rect x="0.5" y="5.6" width="12" height="4.8" rx="0.9" fill="url(#gH)" stroke="#8a8a8a" stroke-width="1"/><path d="M1.4 6.6H11.6" stroke="#f6f6f6" stroke-width="0.7" opacity="0.55"/><rect x="0.5" y="10.7" width="12" height="4.8" rx="0.9" fill="url(#gH)" stroke="#8a8a8a" stroke-width="1"/><path d="M1.4 11.7H11.6" stroke="#f6f6f6" stroke-width="0.7" opacity="0.55"/></svg>
<svg style="left:625.5px;top:137px" width="16" height="15" viewBox="0 0 16 15"><rect x="5.5" y="0.5" width="10" height="10" fill="#fcfcfc" stroke="#a2a6aa" stroke-width="0.9"/><rect x="7" y="2" width="7" height="2.2" fill="#a8dcf4"/><path d="M9 4.2v5M11.5 4.2v5M7 6.5h7" stroke="#c4e6f6" stroke-width="0.8"/><g transform="translate(0 4.2)"><rect x="0.5" y="0.5" width="10.5" height="9.5" fill="#eefaff" stroke="#9a9ea2" stroke-width="1"/><rect x="2" y="2" width="7.5" height="6.5" fill="#9cdcf6"/><rect x="2" y="2" width="7.5" height="2.7" fill="#38b0ea"/><rect x="2" y="4.7" width="2.8" height="3.8" fill="#5cc6f2"/><rect x="5.20" y="2.9" width="1.20" height="1" fill="#5cc6f2" opacity="0.8"/><rect x="5.20" y="5.20" width="1.30" height="1.3" fill="#ffffff"/><rect x="5.20" y="7.20" width="1.30" height="1.3" fill="#ffffff"/><rect x="7.40" y="2.9" width="1.20" height="1" fill="#5cc6f2" opacity="0.8"/><rect x="7.40" y="5.20" width="1.30" height="1.3" fill="#ffffff"/><rect x="7.40" y="7.20" width="1.30" height="1.3" fill="#ffffff"/><rect x="2.7" y="5.20" width="1.3" height="1.3" fill="#9cdcf6" opacity="0.7"/><rect x="2.7" y="7.20" width="1.3" height="1.3" fill="#9cdcf6" opacity="0.7"/></g></svg>
<svg style="left:646px;top:155.5px" width="15" height="14" viewBox="0 0 15 14"><rect x="0.5" y="0.5" width="14" height="13" fill="#d8eefa" stroke="#bfe2f6" stroke-width="1"/><rect x="2" y="2" width="11" height="2.6" fill="#5fb4e6"/><rect x="2" y="4.6" width="2.6" height="7.4" fill="#8fcdee"/><path d="M4.6 6.9h8.4M4.6 9.3h8.4M7.2 4.6V12M10 4.6V12" stroke="#9fd2ee" stroke-width="0.9"/></svg>
<svg style="left:666px;top:173.5px" width="15" height="14" viewBox="0 0 15 14"><rect x="0.5" y="0.5" width="14" height="13" fill="#fdfdfd" stroke="#a2a6aa" stroke-width="1"/><rect x="2.5" y="2.5" width="2.7" height="9" fill="#c4d0f0" stroke="#27399a" stroke-width="1.1"/><rect x="6.5" y="2.5" width="2.7" height="9" fill="#c4d0f0" stroke="#27399a" stroke-width="1.1"/><path d="M10.6 2.5h2.1v9h-2.1" fill="none" stroke="#27399a" stroke-width="1.1"/></svg>
<svg style="left:685.5px;top:192px" width="16" height="14" viewBox="0 0 16 14"><rect x="0.5" y="0.5" width="14.6" height="13" fill="#fff" stroke="#a2a6aa" stroke-width="1"/><rect x="2" y="2" width="11.6" height="2.4" fill="#47b1e6"/><rect x="2" y="4.4" width="3.6" height="7.6" fill="#84d2f2"/><rect x="10" y="4.4" width="3.6" height="7.6" fill="#cfeaf6"/><path d="M2 6.6h11.6M2 9h11.6" stroke="#fff" stroke-width="0.6" opacity="0.8"/><rect x="6.3" y="2" width="3.4" height="10" fill="#dfe8fa" stroke="#27399a" stroke-width="1.1"/></svg>
<svg style="left:685.5px;top:210px" width="16" height="14" viewBox="0 0 16 14"><rect x="0.5" y="0.5" width="14.6" height="13" fill="#fff" stroke="#a2a6aa" stroke-width="1"/><rect x="2" y="2" width="11.6" height="2.4" fill="#47b1e6"/><rect x="2" y="4.4" width="3.6" height="7.6" fill="#84d2f2"/><rect x="10" y="4.4" width="3.6" height="7.6" fill="#cfeaf6"/><path d="M2 6.6h11.6M2 9h11.6" stroke="#fff" stroke-width="0.6" opacity="0.8"/><rect x="6.3" y="2" width="3.4" height="10" fill="#dfe8fa" stroke="#27399a" stroke-width="1.1"/></svg>
<svg style="left:685.5px;top:228px" width="16" height="14" viewBox="0 0 16 14"><rect x="0.5" y="0.5" width="14.6" height="13" fill="#fff" stroke="#a2a6aa" stroke-width="1"/><rect x="2" y="2" width="11.6" height="2.4" fill="#47b1e6"/><rect x="2" y="4.4" width="3.6" height="7.6" fill="#84d2f2"/><rect x="10" y="4.4" width="3.6" height="7.6" fill="#cfeaf6"/><path d="M2 6.6h11.6M2 9h11.6" stroke="#fff" stroke-width="0.6" opacity="0.8"/><rect x="6.3" y="2" width="3.4" height="10" fill="#dfe8fa" stroke="#27399a" stroke-width="1.1"/></svg>
<svg style="left:665px;top:246px" width="16" height="15" viewBox="0 0 16 15"><g transform="translate(8 7.2) rotate(-45)"><g transform="translate(0 -2.3)"><path d="M-7.4 -2.1H4.6L7.4 0 4.6 2.1H-7.4z" fill="#fbfbfb" stroke="#8fa6b6" stroke-width="0.8"/><rect x="-6.4" y="-1.1" width="9" height="2.2" fill="#2a90c4"/><circle cx="4.8" cy="0" r="0.7" fill="#fff" stroke="#8fa6b6" stroke-width="0.5"/></g><g transform="translate(-0.6 2.3)"><path d="M-7.4 -2.1H4.6L7.4 0 4.6 2.1H-7.4z" fill="#fbfbfb" stroke="#8fa6b6" stroke-width="0.8"/><rect x="-6.4" y="-1.1" width="9" height="2.2" fill="#2a90c4"/><circle cx="4.8" cy="0" r="0.7" fill="#fff" stroke="#8fa6b6" stroke-width="0.5"/></g></g></svg>
<svg style="left:666px;top:264px" width="14" height="14" viewBox="0 0 14 14"><rect x="4.10" y="4.25" width="1.80" height="2.70" rx="0.5" fill="#e6e6e6" stroke="#9a9a9a" stroke-width="0.6" transform="rotate(0 5 8.6)"/><rect x="4.10" y="4.25" width="1.80" height="2.70" rx="0.5" fill="#e6e6e6" stroke="#9a9a9a" stroke-width="0.6" transform="rotate(45 5 8.6)"/><rect x="4.10" y="4.25" width="1.80" height="2.70" rx="0.5" fill="#e6e6e6" stroke="#9a9a9a" stroke-width="0.6" transform="rotate(90 5 8.6)"/><rect x="4.10" y="4.25" width="1.80" height="2.70" rx="0.5" fill="#e6e6e6" stroke="#9a9a9a" stroke-width="0.6" transform="rotate(135 5 8.6)"/><rect x="4.10" y="4.25" width="1.80" height="2.70" rx="0.5" fill="#e6e6e6" stroke="#9a9a9a" stroke-width="0.6" transform="rotate(180 5 8.6)"/><rect x="4.10" y="4.25" width="1.80" height="2.70" rx="0.5" fill="#e6e6e6" stroke="#9a9a9a" stroke-width="0.6" transform="rotate(225 5 8.6)"/><rect x="4.10" y="4.25" width="1.80" height="2.70" rx="0.5" fill="#e6e6e6" stroke="#9a9a9a" stroke-width="0.6" transform="rotate(270 5 8.6)"/><rect x="4.10" y="4.25" width="1.80" height="2.70" rx="0.5" fill="#e6e6e6" stroke="#9a9a9a" stroke-width="0.6" transform="rotate(315 5 8.6)"/><circle cx="5" cy="8.6" r="3" fill="#e6e6e6" stroke="#9a9a9a" stroke-width="0.6"/><rect x="4.40" y="4.70" width="1.20" height="2.10" fill="#e6e6e6" transform="rotate(0 5 8.6)"/><rect x="4.40" y="4.70" width="1.20" height="2.10" fill="#e6e6e6" transform="rotate(45 5 8.6)"/><rect x="4.40" y="4.70" width="1.20" height="2.10" fill="#e6e6e6" transform="rotate(90 5 8.6)"/><rect x="4.40" y="4.70" width="1.20" height="2.10" fill="#e6e6e6" transform="rotate(135 5 8.6)"/><rect x="4.40" y="4.70" width="1.20" height="2.10" fill="#e6e6e6" transform="rotate(180 5 8.6)"/><rect x="4.40" y="4.70" width="1.20" height="2.10" fill="#e6e6e6" transform="rotate(225 5 8.6)"/><rect x="4.40" y="4.70" width="1.20" height="2.10" fill="#e6e6e6" transform="rotate(270 5 8.6)"/><rect x="4.40" y="4.70" width="1.20" height="2.10" fill="#e6e6e6" transform="rotate(315 5 8.6)"/><circle cx="5" cy="8.6" r="1.08" fill="#fff" stroke="#9a9a9a" stroke-width="0.6"/><rect x="9.19" y="0.49" width="1.62" height="2.43" rx="0.5" fill="#e6e6e6" stroke="#9a9a9a" stroke-width="0.6" transform="rotate(0 10 4.4)"/><rect x="9.19" y="0.49" width="1.62" height="2.43" rx="0.5" fill="#e6e6e6" stroke="#9a9a9a" stroke-width="0.6" transform="rotate(45 10 4.4)"/><rect x="9.19" y="0.49" width="1.62" height="2.43" rx="0.5" fill="#e6e6e6" stroke="#9a9a9a" stroke-width="0.6" transform="rotate(90 10 4.4)"/><rect x="9.19" y="0.49" width="1.62" height="2.43" rx="0.5" fill="#e6e6e6" stroke="#9a9a9a" stroke-width="0.6" transform="rotate(135 10 4.4)"/><rect x="9.19" y="0.49" width="1.62" height="2.43" rx="0.5" fill="#e6e6e6" stroke="#9a9a9a" stroke-width="0.6" transform="rotate(180 10 4.4)"/><rect x="9.19" y="0.49" width="1.62" height="2.43" rx="0.5" fill="#e6e6e6" stroke="#9a9a9a" stroke-width="0.6" transform="rotate(225 10 4.4)"/><rect x="9.19" y="0.49" width="1.62" height="2.43" rx="0.5" fill="#e6e6e6" stroke="#9a9a9a" stroke-width="0.6" transform="rotate(270 10 4.4)"/><rect x="9.19" y="0.49" width="1.62" height="2.43" rx="0.5" fill="#e6e6e6" stroke="#9a9a9a" stroke-width="0.6" transform="rotate(315 10 4.4)"/><circle cx="10" cy="4.4" r="2.7" fill="#e6e6e6" stroke="#9a9a9a" stroke-width="0.6"/><rect x="9.46" y="0.89" width="1.08" height="1.89" fill="#e6e6e6" transform="rotate(0 10 4.4)"/><rect x="9.46" y="0.89" width="1.08" height="1.89" fill="#e6e6e6" transform="rotate(45 10 4.4)"/><rect x="9.46" y="0.89" width="1.08" height="1.89" fill="#e6e6e6" transform="rotate(90 10 4.4)"/><rect x="9.46" y="0.89" width="1.08" height="1.89" fill="#e6e6e6" transform="rotate(135 10 4.4)"/><rect x="9.46" y="0.89" width="1.08" height="1.89" fill="#e6e6e6" transform="rotate(180 10 4.4)"/><rect x="9.46" y="0.89" width="1.08" height="1.89" fill="#e6e6e6" transform="rotate(225 10 4.4)"/><rect x="9.46" y="0.89" width="1.08" height="1.89" fill="#e6e6e6" transform="rotate(270 10 4.4)"/><rect x="9.46" y="0.89" width="1.08" height="1.89" fill="#e6e6e6" transform="rotate(315 10 4.4)"/><circle cx="10" cy="4.4" r="0.97" fill="#fff" stroke="#9a9a9a" stroke-width="0.6"/></svg>
<svg style="left:625px;top:281px" width="16" height="15" viewBox="0 0 16 15"><rect x="5.5" y="0.5" width="10" height="9.6" fill="#bfe4f6" stroke="#a0a090" stroke-width="0.9"/><rect x="6.6" y="1.6" width="2.4" height="7.4" fill="#5ab8ea"/><path d="M14.4 1L10.2 5.2h2.2l-2 3.8 4.6-4.8h-2.2z" fill="#f4c828" stroke="#c8981a" stroke-width="0.5"/><rect x="0.5" y="5" width="10" height="9.6" fill="#bfe4f6" stroke="#a0a090" stroke-width="0.9"/><rect x="1.6" y="6.2" width="2.6" height="7.4" fill="#5ab8ea"/><path d="M1.6 8.6h2.6M1.6 11h2.6" stroke="#bfe4f6" stroke-width="0.6"/><path d="M9.6 5.6L5 10.2h2.4l-2 3.6 4.8-4.8H7.8z" fill="#f4c828" stroke="#c8981a" stroke-width="0.5"/></svg>
<svg style="left:578px;top:338px" width="1" height="16" viewBox="0 0 1 16"><rect x="0" y="0" width="1" height="1" fill="#b4b4b4"/><rect x="0" y="3" width="1" height="1" fill="#b4b4b4"/><rect x="0" y="6" width="1" height="1" fill="#b4b4b4"/><rect x="0" y="9" width="1" height="1" fill="#b4b4b4"/><rect x="0" y="12" width="1" height="1" fill="#b4b4b4"/><rect x="0" y="15" width="1" height="1" fill="#b4b4b4"/></svg>
<svg style="left:284px;top:386px" width="16" height="1" viewBox="0 0 16 1"><rect x="0" y="0" width="1" height="1" fill="#c4c4c4"/><rect x="3" y="0" width="1" height="1" fill="#c4c4c4"/><rect x="6" y="0" width="1" height="1" fill="#c4c4c4"/><rect x="9" y="0" width="1" height="1" fill="#c4c4c4"/><rect x="12" y="0" width="1" height="1" fill="#c4c4c4"/><rect x="15" y="0" width="1" height="1" fill="#c4c4c4"/></svg>
</body></html>
